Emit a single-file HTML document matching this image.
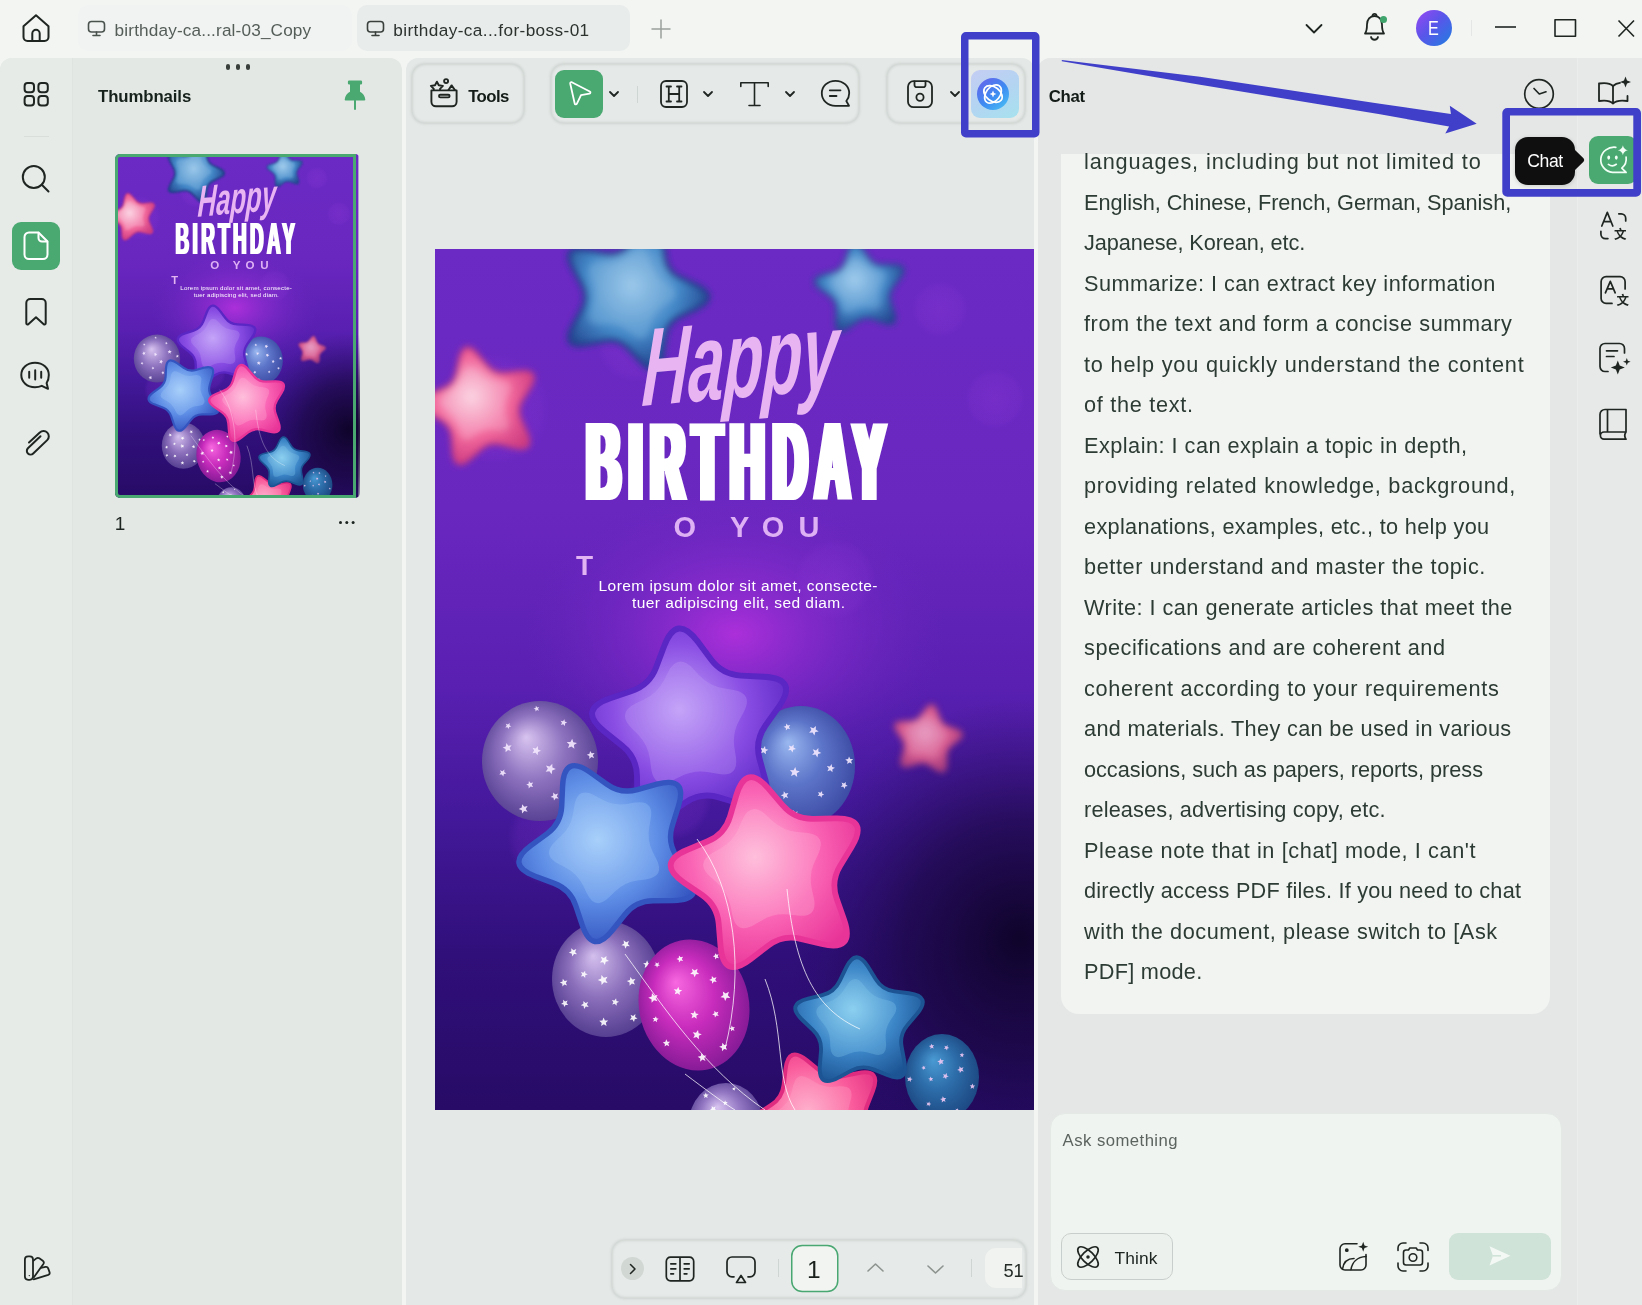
<!DOCTYPE html>
<html lang="en"><head><meta charset="utf-8"><title>UPDF</title>
<style>
*{box-sizing:border-box;margin:0;padding:0}
html,body{width:1642px;height:1305px;overflow:hidden}
body{background:#f3f5f3;font-family:"Liberation Sans","Noto Sans CJK SC",sans-serif;color:#1d2521;position:relative}
#app{position:absolute;left:0;top:0;width:1642px;height:1305px;overflow:hidden;will-change:transform}
.abs{position:absolute}
svg{position:absolute;overflow:visible}
.ic{fill:none;stroke:#1f2622;stroke-width:2;stroke-linecap:round;stroke-linejoin:round}
.panel{position:absolute;background:#e4e8e6}
.t{position:absolute;white-space:nowrap;line-height:1}
.grp{position:absolute;background:#e5e9e7;border-radius:13px;box-shadow:0 0 2.500px 1px rgba(110,128,120,.18),inset 0 0 2.500px 1px rgba(110,128,120,.18)}
.gbtn{position:absolute;width:48px;height:48px;border-radius:9px;background:#4aa871}
</style>
</head>
<body>
<div id="app">

<!-- top bar -->
<div class="abs" style="left:78px;top:5px;width:274px;height:46px;border-radius:10px;background:#f0f3f1"></div>
<div class="abs" style="left:357px;top:5px;width:273px;height:46px;border-radius:10px;background:#e8ecea"></div>
<svg class="ic" style="left:20px;top:12px" width="32" height="32" viewBox="0 0 32 32"><path d="M3.5 14.2 L16 3.2 L28.5 14.2 V25 a4 4 0 0 1 -4 4 H7.500 a4 4 0 0 1 -4 -4 Z"/><path d="M12.3 29 V21.500 a3.700 3.700 0 0 1 7.400 0 V29"/></svg>
<svg class="ic" style="left:87px;top:20px;stroke:#4a524e;stroke-width:1.600" width="20" height="18" viewBox="0 0 20 18"><rect x="1.500" y="1.500" width="16" height="10.500" rx="3"/><path d="M9.500 12 V15.500 M6 15.500 H13"/></svg>
<div class="t" id="tab1" style="left:114.6px;top:22px;font-size:17.2px;color:#555d59;letter-spacing:0.15px">birthday-ca...ral-03_Copy</div>
<svg class="ic" style="left:366px;top:20px;stroke:#3a413d;stroke-width:1.600" width="20" height="18" viewBox="0 0 20 18"><rect x="1.500" y="1.500" width="16" height="10.500" rx="3"/><path d="M9.500 12 V15.500 M6 15.500 H13"/></svg>
<div class="t" id="tab2" style="left:393.3px;top:22px;font-size:17.2px;color:#2c332f;letter-spacing:0.4px">birthday-ca...for-boss-01</div>
<svg class="ic" style="left:651px;top:19px;stroke:#9aa09d;stroke-width:1.500" width="20" height="20" viewBox="0 0 20 20"><path d="M10 1 V19 M1 10 H19"/></svg>
<svg class="ic" style="left:1305px;top:23px;stroke-width:1.800" width="18" height="12" viewBox="0 0 18 12"><path d="M1.500 2 L9 9.500 L16.500 2"/></svg>
<svg class="ic" style="left:1362px;top:11px;stroke-width:1.800" width="26" height="32" viewBox="0 0 26 32"><path d="M3 22.500 C5 20 5 17 5 13.500 C5 8.500 8 5 12.500 5 C17 5 20 8.500 20 13.500 C20 17 20 20 22 22.500 Z"/><path d="M10.500 4.800 a2 2 0 0 1 4 0"/><path d="M9 26 a3.600 3.600 0 0 0 7 0"/></svg>
<div class="abs" style="left:1380px;top:16px;width:7px;height:7px;border-radius:50%;background:#3fa56c"></div>
<div class="abs" style="left:1416px;top:10px;width:36px;height:36px;border-radius:50%;background:linear-gradient(135deg,#9a48f2 0%,#5a55ea 45%,#1f7fe0 100%)"></div>
<div class="t" id="ava" style="left:1428.3px;top:19px;font-size:19.3px;color:#fff;transform:scaleX(.84);transform-origin:0 0">E</div>
<div class="abs" style="left:1471px;top:20px;width:1px;height:16px;background:#e3e6e4"></div>
<svg class="ic" style="left:1495px;top:18px;stroke-width:1.600;stroke-linecap:butt" width="140" height="20" viewBox="0 0 140 20"><path d="M0 9 H21"/><rect x="60" y="1.800" width="20.500" height="16.500"/><path d="M123.500 2.500 L139 18.500 M139 2.500 L123.500 18.500"/></svg>


<!-- left panel -->
<div class="panel" style="left:0;top:58px;width:402px;height:1247px;border-radius:12px 12px 0 0;background:#e3e8e5"></div>
<div class="abs" style="left:0;top:58px;width:73px;height:1247px;border-radius:12px 0 0 0;background:#e6ebe8;border-right:1px solid #dfe4e1"></div>
<svg class="ic" style="left:22px;top:80px" width="28" height="28" viewBox="0 0 28 28"><rect x="2.600" y="2.900" width="9.400" height="9.400" rx="3"/><rect x="16.400" y="2.900" width="9.400" height="9.400" rx="3"/><rect x="2.600" y="16" width="9.400" height="9.400" rx="3"/><rect x="16.400" y="16" width="9.400" height="9.400" rx="3"/></svg>
<div class="abs" style="left:24px;top:136px;width:25px;height:1px;background:#d9dedb"></div>
<svg class="ic" style="left:20px;top:163px" width="32" height="32" viewBox="0 0 32 32"><circle cx="13.800" cy="14" r="11"/><path d="M21.800 21.800 L28.500 28.500"/></svg>
<div class="gbtn" style="left:12px;top:222px"></div>
<svg class="ic" style="left:22px;top:230px;stroke:#fff" width="28" height="32" viewBox="0 0 28 32"><path d="M7 2.500 H16.500 L25.500 11.500 V24.500 a4.500 4.500 0 0 1 -4.500 4.500 H7 a4.500 4.500 0 0 1 -4.500 -4.500 V7 a4.500 4.500 0 0 1 4.500 -4.500 Z"/><path d="M16.500 2.800 V8 a3.500 3.500 0 0 0 3.500 3.500 H25.200"/></svg>
<svg class="ic" style="left:23px;top:296px" width="26" height="32" viewBox="0 0 26 32"><path d="M3.300 7 a4 4 0 0 1 4 -4 H18.700 a4 4 0 0 1 4 4 V27.300 a1.200 1.200 0 0 1 -2 .9 L13 21.300 L5.300 28.200 a1.200 1.200 0 0 1 -2 -.9 Z"/></svg>
<svg class="ic" style="left:19px;top:360px" width="34" height="32" viewBox="0 0 34 32"><path d="M16 2.800 C8 2.800 2.300 8.200 2.300 15 C2.300 21.800 8 27.200 16 27.200 C18.500 27.200 20.800 26.700 22.800 25.800 L29 28.800 L27.600 23 C29.200 20.800 29.800 18 29.800 15 C29.800 8.200 24 2.800 16 2.800 Z"/><path d="M10.200 11.800 V17.800 M16.200 10.200 V19.500 M22.200 11.800 V17.800"/></svg>
<svg class="ic" style="left:22px;top:427px" width="30" height="32" viewBox="0 0 30 32"><path d="M7 15.500 L17.800 5.500 a5.300 5.300 0 0 1 7.400 7.600 L11.200 26.500 a3.700 3.700 0 0 1 -5.300 -5.200 L18.500 9.300"/><path d="M10 25.800 L22.500 13.500" stroke="none"/></svg>
<svg class="ic" style="left:20px;top:1252px;stroke-width:1.800" width="32" height="32" viewBox="0 0 32 32"><rect x="4.900" y="4.300" width="8.100" height="23.500" rx="3.200"/><path d="M13.600 8.600 L16.300 6.400 Q17.800 5.300 19.300 6.300 L22.800 8.800 Q24.500 10.100 23.400 11.900 L13.900 25.200"/><path d="M20.800 15.800 L25.600 14.900 Q27.600 14.600 28.200 16.400 L29.600 20.400 Q30.100 22.200 28.300 22.800 L13.700 27.300"/><circle cx="9.300" cy="23.600" r=".700" fill="#1f2622" stroke="none"/></svg>
<!-- thumbnails panel -->
<div class="abs" style="left:226px;top:64px;width:4px;height:6px;border-radius:2px;background:#39403c"></div>
<div class="abs" style="left:236px;top:64px;width:4px;height:6px;border-radius:2px;background:#39403c"></div>
<div class="abs" style="left:246px;top:64px;width:4px;height:6px;border-radius:2px;background:#39403c"></div>
<div class="t" id="thl" style="left:98px;top:89px;font-size:16.8px;color:#16211b;letter-spacing:-0.1px;font-weight:bold">Thumbnails</div>
<svg style="left:343px;top:79px" width="24" height="32" viewBox="0 0 24 32"><path fill="#4aa871" d="M6.200 1.500 H17.800 a1.300 1.300 0 0 1 1.300 1.300 V4.200 a1.300 1.300 0 0 1 -1.300 1.300 H17 V12.800 C19.800 14.200 22 17 22.300 20.500 a1 1 0 0 1 -1 1.100 H2.700 a1 1 0 0 1 -1 -1.100 C2 17 4.200 14.200 7 12.800 V5.500 H6.200 a1.300 1.300 0 0 1 -1.300 -1.300 V2.800 a1.300 1.300 0 0 1 1.300 -1.300 Z"/><path d="M12 21.500 V30" stroke="#4aa871" stroke-width="2" stroke-linecap="round"/></svg>
<svg style="left:115px;top:154px;overflow:hidden;border-radius:5px" width="245" height="344" viewBox="0 0 613 861" preserveAspectRatio="none"><defs><linearGradient id="thbg" x1="0" y1="0" x2="0" y2="1"><stop offset="0" stop-color="#6b2ac4"/><stop offset=".3" stop-color="#6a27c0"/><stop offset=".5" stop-color="#5a20b2"/><stop offset=".66" stop-color="#43189a"/><stop offset=".82" stop-color="#300f7a"/><stop offset="1" stop-color="#270b66"/></linearGradient><radialGradient id="thglow" cx="50%" cy="50%" r="50%"><stop offset="0" stop-color="#b030dc" stop-opacity="0.95"/><stop offset="0.5" stop-color="#8a2cd0" stop-opacity="0.5"/><stop offset="1" stop-color="#6a27c0" stop-opacity="0"/></radialGradient><radialGradient id="thdark" cx="50%" cy="50%" r="50%"><stop offset="0" stop-color="#0d0326" stop-opacity="0.95"/><stop offset="0.5" stop-color="#160638" stop-opacity="0.6"/><stop offset="1" stop-color="#230a5c" stop-opacity="0"/></radialGradient><radialGradient id="thbok" cx="50%" cy="50%" r="50%"><stop offset="0" stop-color="#a040e0" stop-opacity="0.22"/><stop offset="0.8" stop-color="#9038d8" stop-opacity="0.15"/><stop offset="1" stop-color="#9038d8" stop-opacity="0"/></radialGradient><filter id="thblur2" x="-20%" y="-20%" width="140%" height="140%"><feGaussianBlur stdDeviation="2"/></filter><filter id="thblur3" x="-20%" y="-20%" width="140%" height="140%"><feGaussianBlur stdDeviation="3"/></filter><filter id="thblur4" x="-20%" y="-20%" width="140%" height="140%"><feGaussianBlur stdDeviation="4"/></filter><radialGradient id="ths1" cx="45%" cy="42%" r="62%"><stop offset="0" stop-color="#9cc8ea"/><stop offset="0.55" stop-color="#4388c8"/><stop offset="1" stop-color="#1f3c88"/></radialGradient><radialGradient id="ths2" cx="45%" cy="42%" r="62%"><stop offset="0" stop-color="#a0ccec"/><stop offset="0.55" stop-color="#4388c8"/><stop offset="1" stop-color="#23448e"/></radialGradient><radialGradient id="ths3" cx="45%" cy="42%" r="62%"><stop offset="0" stop-color="#fbd4e2"/><stop offset="0.55" stop-color="#f2689c"/><stop offset="1" stop-color="#cc3a80"/></radialGradient><radialGradient id="ths4" cx="45%" cy="42%" r="62%"><stop offset="0" stop-color="#f6a8c4"/><stop offset="0.55" stop-color="#e4608e"/><stop offset="1" stop-color="#a83c7c"/></radialGradient><radialGradient id="thb1" cx="50%" cy="50%" r="60%" fx="38%" fy="30%"><stop offset="0" stop-color="#d8c4f0"/><stop offset="0.45" stop-color="#8f74c0"/><stop offset="1" stop-color="#4a3488"/></radialGradient><radialGradient id="thb2" cx="50%" cy="50%" r="60%" fx="38%" fy="30%"><stop offset="0" stop-color="#9ab8f0"/><stop offset="0.45" stop-color="#5c74c8"/><stop offset="1" stop-color="#34409a"/></radialGradient><radialGradient id="ths5" cx="45%" cy="42%" r="62%"><stop offset="0" stop-color="#c4a4f8"/><stop offset="0.55" stop-color="#8a4ee4"/><stop offset="1" stop-color="#5a26c4"/></radialGradient><radialGradient id="thb3" cx="50%" cy="50%" r="60%" fx="38%" fy="30%"><stop offset="0" stop-color="#d4c0ee"/><stop offset="0.45" stop-color="#8c70bc"/><stop offset="1" stop-color="#463084"/></radialGradient><radialGradient id="ths6" cx="45%" cy="42%" r="62%"><stop offset="0" stop-color="#a8d0fa"/><stop offset="0.55" stop-color="#5e8ee6"/><stop offset="1" stop-color="#3454c0"/></radialGradient><radialGradient id="thb4" cx="50%" cy="50%" r="60%" fx="38%" fy="30%"><stop offset="0" stop-color="#f868e0"/><stop offset="0.45" stop-color="#c82cbc"/><stop offset="1" stop-color="#74168c"/></radialGradient><radialGradient id="thb5" cx="50%" cy="50%" r="60%" fx="38%" fy="30%"><stop offset="0" stop-color="#4a9ad4"/><stop offset="0.45" stop-color="#2c6ca8"/><stop offset="1" stop-color="#183e78"/></radialGradient><radialGradient id="thb6" cx="50%" cy="50%" r="60%" fx="38%" fy="30%"><stop offset="0" stop-color="#d8c4f0"/><stop offset="0.45" stop-color="#9478c4"/><stop offset="1" stop-color="#4a3488"/></radialGradient><radialGradient id="ths7" cx="45%" cy="42%" r="62%"><stop offset="0" stop-color="#ffb0cc"/><stop offset="0.55" stop-color="#fa5c9c"/><stop offset="1" stop-color="#e02c80"/></radialGradient><radialGradient id="ths8" cx="45%" cy="42%" r="62%"><stop offset="0" stop-color="#ffc0dc"/><stop offset="0.55" stop-color="#fa64b4"/><stop offset="1" stop-color="#e83498"/></radialGradient><radialGradient id="ths9" cx="45%" cy="42%" r="62%"><stop offset="0" stop-color="#8cd0f0"/><stop offset="0.55" stop-color="#3c86c8"/><stop offset="1" stop-color="#1c5494"/></radialGradient><filter id="thfat" x="-5%" y="-5%" width="110%" height="110%"><feMorphology operator="dilate" radius="3.6 0.3"/></filter></defs><rect width="609" height="861" fill="url(#thbg)"/><ellipse cx="300" cy="385" rx="210" ry="150" fill="url(#thglow)"/><ellipse cx="585" cy="690" rx="230" ry="240" fill="url(#thdark)"/><circle cx="120" cy="590" r="48" fill="url(#thbok)"/><circle cx="235" cy="550" r="42" fill="url(#thbok)"/><circle cx="60" cy="160" r="55" fill="url(#thbok)"/><circle cx="200" cy="95" r="38" fill="url(#thbok)"/><circle cx="560" cy="150" r="30" fill="url(#thbok)"/><circle cx="400" cy="330" r="40" fill="url(#thbok)"/><circle cx="505" cy="60" r="28" fill="url(#thbok)"/><circle cx="330" cy="640" r="40" fill="url(#thbok)"/><g filter="url(#thblur3)"><path d="M206 -16.5Q224.2 -35.7 227.6 -9.5L230 8.7Q231.9 22.7 244.6 28.7L261.2 36.6Q285 48 261.2 59.4L244.6 67.3Q231.9 73.3 230 87.3L227.6 105.5Q224.2 131.7 206 112.5L193.4 99.2Q183.7 89 169.8 91.6L151.8 94.9Q125.8 99.7 138.4 76.5L147.2 60.4Q153.9 48 147.2 35.6L138.4 19.5Q125.8 -3.7 151.8 1.1L169.8 4.4Q183.7 7 193.4 -3.2Z" fill="url(#ths1)" stroke="#1f3c88" stroke-width="4.4" stroke-linejoin="round"/><path d="M197.8 3.1Q210.3 -7.4 214.3 8.5L216 15.6Q218.6 26.2 227.9 32L234.1 35.8Q248 44.5 234.1 53.1L227.9 57Q218.6 62.8 216 73.4L214.3 80.5Q210.3 96.4 197.8 85.8L192.2 81.1Q183.9 74.1 173 74.8L165.7 75.4Q149.3 76.5 155.5 61.4L158.3 54.6Q162.4 44.5 158.3 34.4L155.5 27.6Q149.3 12.4 165.7 13.6L173 14.1Q183.9 14.9 192.2 7.9Z" fill="#9cc8ea" opacity=".28"/></g><g filter="url(#thblur3)"><path d="M413.4 1.9Q418.5 -13.5 427.6 -0.1L433.8 9Q438.7 16.2 447.3 16.2L458.3 16.3Q474.5 16.3 464.6 29.1L457.9 37.9Q452.6 44.7 455.2 52.9L458.6 63.4Q463.5 78.8 448.3 73.4L437.9 69.7Q429.8 66.7 422.7 71.8L413.8 78.2Q400.6 87.7 401.1 71.5L401.5 60.5Q401.7 51.8 394.8 46.7L385.9 40.2Q372.8 30.6 388.4 26.1L399 23Q407.2 20.6 410 12.4Z" fill="url(#ths2)" stroke="#23448e" stroke-width="2.7" stroke-linejoin="round"/><path d="M415 13.8Q419.2 4.7 425.7 12.3L428.6 15.6Q433 20.7 439.6 21.5L444 22Q453.9 23.2 448.7 31.7L446.4 35.5Q443 41.2 444.3 47.8L445.1 52.1Q447.1 61.9 437.3 59.6L433.1 58.6Q426.5 57.1 420.7 60.3L416.9 62.5Q408.1 67.4 407.3 57.4L406.9 53Q406.4 46.4 401.5 41.8L398.2 38.8Q390.9 32 400.1 28.1L404.2 26.5Q410.4 23.9 413.2 17.8Z" fill="#a0ccec" opacity=".28"/></g><g filter="url(#thblur3)"><path d="M24.6 110.6Q29.1 90.1 42.6 106.1L51.9 117Q59.1 125.5 70.3 124.4L84.5 123Q105.4 120.9 94.3 138.8L86.8 150.9Q80.9 160.4 85.4 170.7L91.2 183.8Q99.6 203 79.2 198L65.3 194.6Q54.5 192 46.1 199.4L35.4 208.9Q19.8 222.9 18.2 202L17.2 187.7Q16.3 176.5 6.6 170.9L-5.7 163.7Q-23.8 153.1 -4.4 145.2L8.8 139.7Q19.2 135.5 21.6 124.6Z" fill="url(#ths3)" stroke="#cc3a80" stroke-width="3.5" stroke-linejoin="round"/><path d="M28.5 125.4Q32.7 113.1 42.2 122L46.3 125.9Q52.6 131.9 61.3 132L67 132Q80 132.2 74.4 144L72 149.1Q68.3 157 70.9 165.2L72.6 170.7Q76.4 183.1 63.5 181.4L57.9 180.7Q49.3 179.6 42.2 184.6L37.6 187.9Q26.9 195.4 24.5 182.6L23.5 177.1Q21.9 168.5 14.9 163.4L10.3 160Q-0.1 152.2 11.3 145.9L16.3 143.2Q23.9 139 26.7 130.8Z" fill="#fbd4e2" opacity=".28"/></g><g filter="url(#thblur3)" opacity="0.92"><path d="M490.4 460.3Q497.7 450.4 502 461.9L504.8 469.2Q507.1 475.4 513.3 477.5L520.7 480Q532.4 483.9 522.8 491.6L516.7 496.4Q511.5 500.5 511.5 507.1L511.4 514.9Q511.2 527.2 501 520.4L494.5 516.1Q489 512.5 482.7 514.5L475.3 516.8Q463.5 520.5 466.8 508.6L468.9 501.1Q470.6 494.8 466.8 489.4L462.3 483.1Q455.1 473 467.4 472.5L475.2 472.1Q481.8 471.8 485.7 466.5Z" fill="url(#ths4)" stroke="#a83c7c" stroke-width="2.1" stroke-linejoin="round"/><path d="M488.7 469.7Q493.9 464.2 497.4 471L498.8 473.7Q501.1 478.2 505.7 480.4L508.5 481.7Q515.4 484.9 510 490.4L507.9 492.5Q504.3 496.2 503.7 501.2L503.3 504.2Q502.3 511.8 495.5 508.4L492.7 507Q488.2 504.7 483.2 505.7L480.2 506.2Q472.7 507.6 473.9 500.1L474.3 497.1Q475.1 492.1 472.6 487.6L471.2 484.9Q467.5 478.2 475 477L478.1 476.5Q483.1 475.7 486.6 472Z" fill="#f6a8c4" opacity=".28"/></g><g><ellipse cx="105" cy="512" rx="58" ry="60" fill="url(#thb1)"/><g fill="#f4e8ff" opacity=".9"><polygon points="69.4,520.6 69.2,523.1 71.4,524.5 68.9,525.1 68.3,527.6 66.9,525.4 64.3,525.6 66,523.6 65,521.2 67.4,522.2"/><polygon points="137.2,489.7 138.3,493.3 142,494 138.9,496.1 139.4,499.8 136.4,497.5 133,499.1 134.3,495.6 131.7,492.9 135.4,493"/><polygon points="118.2,543.5 120.3,545.5 123.1,544.6 121.8,547.2 123.6,549.6 120.7,549.2 119,551.6 118.5,548.7 115.6,547.9 118.2,546.4"/><polygon points="74.7,474.1 74.5,476.3 76.3,477.5 74.2,478 73.6,480.1 72.5,478.2 70.3,478.4 71.7,476.7 70.9,474.7 72.9,475.5"/><polygon points="145.3,534.7 145.8,537.1 148.1,537.8 146,539 146,541.5 144.2,539.8 141.9,540.6 142.9,538.4 141.4,536.4 143.9,536.7"/><polygon points="102.9,497.1 103,500.4 106,501.8 103,502.9 102.6,506.2 100.6,503.7 97.4,504.3 99.1,501.6 97.5,498.7 100.7,499.6"/><polygon points="155.1,502 156.7,504.3 159.6,504 157.8,506.3 159.1,508.9 156.4,507.9 154.3,509.9 154.3,507 151.8,505.7 154.5,504.8"/><polygon points="129.4,470.2 129.8,472.6 132.1,473.4 130,474.5 130,477 128.2,475.2 125.9,476 127,473.8 125.5,471.8 128,472.2"/><polygon points="93.9,532 95.6,534.1 98.2,533.6 96.8,535.8 98.1,538.1 95.5,537.4 93.7,539.4 93.6,536.7 91.2,535.6 93.6,534.7"/><polygon points="117.3,514.7 117.4,518.5 120.8,520.1 117.2,521.4 116.7,525.2 114.4,522.2 110.7,522.8 112.8,519.7 111,516.4 114.6,517.4"/><polygon points="71.4,494.1 73.3,496.8 76.6,496.3 74.6,499 76.1,502 73,501 70.6,503.3 70.6,500 67.7,498.4 70.8,497.4"/><polygon points="87.1,555.2 89.3,557.8 92.6,557 90.8,559.9 92.6,562.8 89.3,562 87.1,564.6 86.8,561.2 83.7,559.9 86.8,558.6"/><polygon points="100.9,456.8 102.2,458.5 104.2,458.1 103,459.8 104,461.7 102,461.1 100.5,462.6 100.5,460.5 98.6,459.5 100.6,458.9"/></g></g><g><ellipse cx="366" cy="517" rx="54" ry="60" fill="url(#thb2)"/><g fill="#f4e8ff" opacity=".9"><polygon points="328.5,520.6 328.5,523.1 330.7,524.2 328.3,525 327.9,527.5 326.5,525.5 324,525.9 325.5,523.8 324.4,521.6 326.7,522.4"/><polygon points="358.7,495.6 358.5,498.5 361,500 358.2,500.7 357.5,503.5 355.9,501.1 353,501.3 354.9,499.1 353.8,496.4 356.5,497.5"/><polygon points="396.6,515 397.1,517.9 400,518.8 397.4,520.2 397.5,523.3 395.3,521.2 392.4,522.2 393.7,519.5 391.9,517.1 394.9,517.5"/><polygon points="358.2,561 360,563.2 362.9,562.6 361.3,565.1 362.8,567.6 360,566.9 358,569.1 357.8,566.2 355.2,565 357.9,563.9"/><polygon points="351.3,474.5 352.9,476.5 355.3,476 353.9,478.1 355.1,480.3 352.7,479.6 350.9,481.4 350.9,478.9 348.6,477.8 351,477"/><polygon points="330,497 330.5,500 333.4,500.8 330.8,502.3 330.9,505.3 328.7,503.2 325.8,504.3 327.1,501.5 325.3,499.1 328.3,499.5"/><polygon points="387.1,542.1 387.1,544.5 389.2,545.7 386.9,546.4 386.5,548.7 385.1,546.8 382.7,547.1 384.1,545.2 383.1,543.1 385.4,543.8"/><polygon points="348.8,542.3 350.6,544.6 353.4,544.1 351.8,546.4 353.2,548.9 350.4,548.1 348.5,550.2 348.4,547.4 345.8,546.2 348.5,545.2"/><polygon points="410.9,533.1 410.6,535.6 412.7,536.9 410.3,537.4 409.6,539.9 408.3,537.7 405.8,537.8 407.5,535.9 406.6,533.6 408.9,534.6"/><polygon points="360.3,518 361.3,521.5 364.8,522.3 361.8,524.3 362.2,527.9 359.3,525.6 356,527.1 357.3,523.7 354.9,521 358.5,521.2"/><polygon points="381,477 380.7,480.5 383.7,482.4 380.3,483.1 379.4,486.5 377.6,483.5 374.1,483.8 376.4,481.1 375.1,477.9 378.3,479.2"/><polygon points="414,507.4 415.3,509.9 418.2,509.9 416.1,511.9 417.1,514.7 414.5,513.4 412.2,515.1 412.6,512.3 410.2,510.6 413.1,510.1"/><polygon points="383.4,499.1 383.3,502.5 386.3,504.1 383.1,505.1 382.4,508.4 380.5,505.6 377.1,506.1 379.2,503.4 377.8,500.3 381,501.4"/></g></g><g><path d="M229.1 397.3Q241.6 364.1 262.7 392.6L276.1 410.6Q287.4 425.8 306.2 426.6L328.7 427.7Q364.1 429.3 343.6 458.1L330.5 476.5Q319.6 491.9 324.6 510.1L330.6 531.8Q340 565.9 306.2 555.3L284.7 548.6Q266.7 542.9 250.9 553.3L232.2 565.7Q202.6 585.2 202.2 549.8L202 527.3Q201.8 508.4 187 496.6L169.5 482.6Q141.8 460.5 175.3 449.2L196.7 442Q214.6 436 221.2 418.3Z" fill="url(#ths5)" stroke="#5a26c4" stroke-width="5.9" stroke-linejoin="round"/><path d="M233 423.3Q243.1 403.8 258.1 419.8L264.2 426.2Q274.2 436.9 288.7 439.2L297.4 440.7Q319 444.2 308.5 463.5L304.3 471.2Q297.2 484 299.4 498.5L300.8 507.2Q304.1 528.9 282.5 524.8L273.9 523.2Q259.5 520.5 246.4 527L238.5 531Q218.9 540.9 216.1 519.1L215 510.4Q213.2 495.8 202.9 485.4L196.7 479.2Q181.2 463.6 201.1 454.2L209 450.4Q222.3 444.2 229 431.2Z" fill="#c4a4f8" opacity=".28"/></g><g><ellipse cx="171" cy="730" rx="54" ry="58" fill="url(#thb3)"/><g fill="#fff" opacity=".9"><polygon points="168.6,768.4 169.9,771.4 173.2,771.5 170.8,773.7 171.6,776.9 168.8,775.3 166.1,777.1 166.7,773.9 164.2,771.8 167.4,771.5"/><polygon points="154,683.2 154.1,685.2 155.9,686 154,686.8 153.8,688.8 152.5,687.2 150.5,687.6 151.7,685.9 150.6,684.2 152.6,684.7"/><polygon points="181.1,749.3 181.5,751.9 184.1,752.8 181.7,754 181.6,756.7 179.7,754.8 177.2,755.6 178.4,753.2 176.9,751 179.5,751.4"/><polygon points="171.5,707 171.2,710.3 174,712.1 170.7,712.8 169.9,716 168.2,713.2 164.9,713.4 167.1,710.9 165.9,707.8 168.9,709.1"/><polygon points="150.1,721.7 150.3,724.3 152.8,725.3 150.3,726.3 150.2,728.9 148.4,726.9 145.9,727.5 147.2,725.3 145.9,723.1 148.4,723.7"/><polygon points="188.6,691.3 191.1,693.3 193.9,692 192.8,694.9 194.9,697.2 191.8,697.1 190.3,699.8 189.5,696.8 186.4,696.2 189,694.4"/><polygon points="195.4,727.9 197.3,730.6 200.4,730.1 198.5,732.7 199.9,735.6 196.9,734.5 194.6,736.7 194.6,733.5 191.8,732 194.9,731.1"/><polygon points="200.4,765.1 200.1,768 202.5,769.5 199.7,770.2 199,773 197.5,770.5 194.7,770.7 196.6,768.5 195.5,765.8 198.1,767"/><polygon points="212.1,711.2 213.2,713.9 216.1,714.1 213.9,716 214.6,718.8 212.1,717.3 209.7,718.9 210.3,716 208.1,714.2 211,713.9"/><polygon points="127.8,729.8 129.6,732 132.4,731.5 130.8,733.9 132.1,736.4 129.4,735.6 127.4,737.6 127.4,734.8 124.8,733.6 127.5,732.6"/><polygon points="148.4,751.9 150.5,753.9 153.2,753 151.9,755.6 153.7,758 150.8,757.5 149.1,759.9 148.6,757 145.8,756.2 148.4,754.8"/><polygon points="136.2,699.2 138.5,701.2 141.3,700.1 140.1,702.9 142,705.2 139,704.9 137.4,707.5 136.7,704.5 133.8,703.7 136.4,702.2"/><polygon points="166.4,725.9 168.9,728.7 172.5,727.7 170.6,730.9 172.6,734 169,733.3 166.6,736.1 166.3,732.4 162.8,731.1 166.2,729.6"/><polygon points="128.1,750.8 130.1,752.6 132.6,751.6 131.5,754 133.2,756.1 130.6,755.9 129.2,758.1 128.6,755.5 126,754.9 128.3,753.5"/></g></g><g><path d="M127.6 536.9Q129.1 504.8 155.3 523.4L171.9 535.2Q185.8 545.2 202.4 540.6L222 535.2Q253 526.7 243.4 557.3L237.3 576.8Q232.2 593.1 241.6 607.4L252.8 624.4Q270.5 651.2 238.4 651.6L218 651.8Q200.9 652 190.2 665.3L177.4 681.3Q157.4 706.4 147.2 676L140.7 656.6Q135.2 640.4 119.2 634.4L100.1 627.2Q70 615.9 95.8 596.7L112.2 584.6Q125.9 574.4 126.7 557.3Z" fill="url(#ths6)" stroke="#3454c0" stroke-width="5.4" stroke-linejoin="round"/><path d="M139.4 556.7Q142.6 537.1 160.1 546.7L167.1 550.5Q178.7 556.9 191.9 554.9L199.8 553.6Q219.4 550.6 215.7 570.2L214.3 578.1Q211.8 591.1 217.8 602.9L221.4 610.1Q230.3 627.9 210.6 630.4L202.6 631.4Q189.5 633.1 180 642.4L174.3 648.1Q160.2 662.1 151.7 644.1L148.3 636.8Q142.6 624.8 130.8 618.7L123.7 615.1Q106 606 120.5 592.3L126.3 586.8Q136 577.7 138.1 564.6Z" fill="#a8d0fa" opacity=".28"/></g><g transform="rotate(-12 259 756)"><ellipse cx="259" cy="756" rx="55" ry="66" fill="url(#thb4)"/><g fill="#fff" opacity=".9"><polygon points="291.5,783.9 292.3,785.8 294.4,786 292.8,787.4 293.3,789.5 291.5,788.4 289.7,789.4 290.2,787.4 288.6,786 290.7,785.8"/><polygon points="230.2,706.2 231.6,707.7 233.6,707 232.6,708.9 233.8,710.6 231.8,710.2 230.6,711.9 230.3,709.8 228.3,709.2 230.1,708.3"/><polygon points="257.7,781.4 257.6,784.7 260.5,786.3 257.3,787.2 256.7,790.5 254.8,787.8 251.5,788.2 253.5,785.5 252.1,782.5 255.2,783.6"/><polygon points="254.6,704.4 255.8,706.6 258.4,706.5 256.6,708.4 257.5,710.8 255.2,709.7 253.1,711.2 253.5,708.7 251.4,707.3 253.9,706.8"/><polygon points="224.7,783.8 225.4,786.4 228.1,786.9 225.8,788.4 226.2,791.1 224,789.4 221.6,790.6 222.5,788 220.7,786.1 223.4,786.1"/><polygon points="282.5,731.3 284,733.7 286.8,733.5 285,735.7 286,738.3 283.4,737.2 281.2,739.1 281.5,736.2 279,734.7 281.8,734.1"/><polygon points="256.4,804.5 257.4,807.5 260.6,808 258,809.9 258.6,813.1 256,811.2 253.2,812.7 254.1,809.7 251.8,807.5 255,807.4"/><polygon points="247.5,734.9 247.7,737.9 250.5,739.2 247.6,740.3 247.3,743.4 245.4,741 242.4,741.6 244,739 242.5,736.4 245.5,737.2"/><polygon points="220.4,735.6 222,738.7 225.5,738.7 223,741.2 224,744.6 220.9,743 218,745 218.6,741.5 215.8,739.4 219.3,738.9"/><polygon points="277.7,765.9 279.1,767.9 281.5,767.6 280,769.6 281,771.8 278.7,771 276.9,772.7 277,770.2 274.8,769 277.2,768.3"/><polygon points="290,748.7 292.4,751.4 295.9,750.4 294.1,753.6 296,756.6 292.5,755.8 290.3,758.6 289.9,755.1 286.5,753.8 289.8,752.3"/><polygon points="258.7,761.5 259,764.6 261.8,765.7 259,766.9 258.8,770 256.8,767.7 253.9,768.4 255.4,765.8 253.8,763.2 256.8,763.9"/><polygon points="219.5,759 219.6,761.2 221.6,762.2 219.5,763 219.2,765.2 217.8,763.4 215.6,763.8 216.9,762 215.8,760 217.9,760.6"/><polygon points="290.4,709.7 291.5,711.6 293.8,711.6 292.3,713.2 293.1,715.4 291,714.4 289.2,715.8 289.5,713.6 287.6,712.3 289.8,711.8"/><polygon points="264.5,720 266.9,722.3 270,721.3 268.6,724.2 270.5,726.8 267.3,726.4 265.4,729.1 264.8,725.8 261.7,724.9 264.6,723.3"/><polygon points="278.9,798.7 280.3,801.5 283.4,801.5 281.2,803.7 282.1,806.6 279.3,805.2 276.8,807 277.3,803.9 274.9,802.1 277.9,801.6"/></g></g><g><ellipse cx="507" cy="828" rx="37" ry="43" fill="url(#thb5)"/><g fill="#f0c8f4" opacity=".9"><polygon points="511.9,824.1 511.8,826.4 513.8,827.5 511.6,828.1 511.1,830.3 509.9,828.4 507.7,828.7 509,826.9 508.1,824.9 510.2,825.7"/><polygon points="505.2,809.2 506.5,811.2 508.9,811 507.4,812.9 508.4,815.1 506.1,814.2 504.3,815.9 504.4,813.4 502.3,812.3 504.7,811.6"/><polygon points="527.2,803.6 527.7,805.2 529.4,805.6 528,806.5 528.2,808.2 526.9,807.2 525.3,807.9 525.9,806.3 524.7,805 526.4,805.1"/><polygon points="507.7,847.2 508.9,849.1 511.2,848.9 509.7,850.7 510.6,852.8 508.5,851.9 506.8,853.4 506.9,851.1 505,850 507.2,849.4"/><polygon points="487.9,816.6 488.9,817.8 490.5,817.4 489.7,818.8 490.6,820.1 489,819.8 488,821.1 487.8,819.5 486.3,818.9 487.8,818.2"/><polygon points="475.4,827.4 475.7,829.4 477.7,830.1 475.8,831 475.8,833.1 474.4,831.6 472.4,832.3 473.3,830.4 472.1,828.7 474.2,829"/><polygon points="522.9,859.2 522.9,860.6 524.2,861.2 522.9,861.7 522.7,863.1 521.8,862 520.4,862.2 521.2,861.1 520.5,859.8 521.9,860.2"/><polygon points="496.2,794.7 497.2,796.3 499.2,796.1 497.9,797.6 498.7,799.4 496.9,798.7 495.4,800 495.6,798 493.9,797.1 495.8,796.6"/><polygon points="524.4,817.3 526.1,819.1 528.5,818.3 527.4,820.5 528.8,822.5 526.4,822.1 524.9,824.1 524.5,821.7 522.2,820.9 524.4,819.8"/><polygon points="495.4,827.5 496.4,829 498.2,828.9 497,830.3 497.7,832 496,831.3 494.7,832.5 494.8,830.6 493.2,829.7 495,829.3"/><polygon points="537.6,834.5 538.2,836.4 540.2,836.6 538.6,837.9 539,839.8 537.4,838.7 535.6,839.7 536.2,837.7 534.7,836.4 536.7,836.3"/><polygon points="512.6,796.1 512.5,798 514.2,799 512.4,799.5 512,801.4 510.9,799.8 509,800 510.2,798.5 509.4,796.8 511.2,797.4"/><polygon points="494.4,852.5 494.6,854.3 496.2,855 494.6,855.7 494.5,857.5 493.3,856.1 491.5,856.6 492.4,855 491.5,853.5 493.2,853.9"/><polygon points="507.7,864.6 507.8,865.9 509,866.4 507.8,866.9 507.7,868.2 506.9,867.3 505.6,867.6 506.3,866.4 505.6,865.3 506.8,865.6"/></g></g><g><ellipse cx="291" cy="874" rx="37" ry="40" fill="url(#thb6)"/><g fill="#fff" opacity=".9"><polygon points="277.3,889.7 277.5,892.2 279.7,893.2 277.4,894.1 277.1,896.5 275.6,894.6 273.2,895.1 274.5,893 273.3,890.9 275.7,891.5"/><polygon points="289.6,899.5 290.4,901.5 292.6,901.7 290.9,903.1 291.3,905.3 289.5,904.1 287.6,905.2 288.2,903.1 286.5,901.6 288.7,901.5"/><polygon points="308.3,872.8 309.6,874.1 311.3,873.6 310.5,875.2 311.5,876.7 309.7,876.4 308.6,877.8 308.3,876 306.6,875.4 308.3,874.6"/><polygon points="290.1,851.2 290.9,852.9 292.8,853 291.4,854.3 291.9,856.1 290.3,855.2 288.7,856.3 289.1,854.4 287.6,853.2 289.5,853"/><polygon points="299.4,837.9 299.6,839.3 300.9,839.7 299.7,840.3 299.8,841.7 298.8,840.7 297.5,841.2 298.1,840 297.2,838.9 298.6,839"/><polygon points="276.7,857 278.5,858.5 280.6,857.5 279.8,859.7 281.4,861.4 279.1,861.3 277.9,863.4 277.3,861.1 275,860.7 276.9,859.3"/><polygon points="270.8,843.6 271.6,845.5 273.7,845.6 272.1,847 272.6,849 270.8,847.9 269.1,849 269.5,847 267.9,845.7 270,845.5"/><polygon points="289,877.1 290.2,879.7 293.1,879.9 290.9,881.8 291.7,884.6 289.2,883.2 286.8,884.7 287.4,881.9 285.1,880.1 288,879.8"/></g></g><g><path d="M350.5 820.4Q353.3 796 372.3 811.6L384.4 821.5Q394.5 829.8 407.4 827.2L422.7 824.2Q446.8 819.3 437.8 842.2L432.1 856.8Q427.4 869 433.8 880.4L441.5 894Q453.5 915.5 429 914L413.4 913.1Q400.3 912.3 391.4 922L380.8 933.5Q364.2 951.6 358 927.8L354 912.6Q350.7 899.9 338.8 894.5L324.6 888Q302.2 877.7 322.9 864.5L336.1 856Q347.1 849 348.7 835.9Z" fill="url(#ths7)" stroke="#e02c80" stroke-width="4.1" stroke-linejoin="round"/><path d="M358.2 836.4Q361.7 821.6 374.5 829.8L379.7 833.1Q388.2 838.6 398.4 837.8L404.5 837.3Q419.7 836 415.8 850.8L414.2 856.7Q411.7 866.6 415.6 875.9L417.9 881.6Q423.8 895.7 408.6 896.5L402.5 896.9Q392.3 897.5 384.6 904.1L380 908.1Q368.4 918 362.9 903.8L360.7 898.1Q357 888.7 348.3 883.4L343 880.2Q330 872.3 341.8 862.6L346.6 858.7Q354.4 852.3 356.8 842.4Z" fill="#ffb0cc" opacity=".28"/></g><g><path d="M301.2 546.6Q311.1 513.5 333.5 539.7L347.8 556.4Q359.8 570.3 378.2 569.9L400.1 569.3Q434.6 568.5 416.6 597.9L405.2 616.7Q395.6 632.4 401.7 649.7L409 670.4Q420.5 703 386.9 695L365.6 689.9Q347.7 685.6 333.1 696.8L315.6 710.1Q288.2 731.1 285.5 696.7L283.7 674.8Q282.2 656.5 267.1 646L249 633.6Q220.6 614 252.5 600.7L272.7 592.3Q289.7 585.2 295 567.6Z" fill="url(#ths8)" stroke="#e83498" stroke-width="5.8" stroke-linejoin="round"/><path d="M307.1 571.3Q315.6 551.7 331.3 566.2L337.6 572Q348.1 581.7 362.3 583L370.8 583.8Q392.1 585.8 383.2 605.2L379.6 613Q373.7 625.9 376.8 639.9L378.7 648.2Q383.4 669.1 362.1 666.6L353.6 665.6Q339.4 663.9 327.2 671.2L319.8 675.6Q301.4 686.5 297.2 665.6L295.5 657.1Q292.7 643.1 282 633.7L275.6 628.1Q259.5 613.9 278.1 603.5L285.6 599.3Q298.1 592.3 303.7 579.2Z" fill="#ffc0dc" opacity=".28"/></g><g><path d="M411 718.9Q421 698.1 433.1 717.8L440.8 730.3Q447.2 740.8 459.4 742.4L474 744.3Q496.9 747.4 481.9 765L472.4 776.2Q464.4 785.6 466.6 797.7L469.3 812.1Q473.5 834.8 452.1 826L438.5 820.4Q427.1 815.8 416.3 821.6L403.4 828.6Q383.1 839.6 384.8 816.5L386 801.9Q386.9 789.6 378 781.1L367.4 771Q350.6 755.1 373.1 749.6L387.3 746.2Q399.3 743.3 404.6 732.2Z" fill="url(#ths9)" stroke="#1c5494" stroke-width="3.9" stroke-linejoin="round"/><path d="M411.8 736.4Q419.4 724.2 428.3 735.5L431.9 740Q437.8 747.5 447 749.9L452.6 751.3Q466.5 754.8 458.5 766.7L455.3 771.5Q450 779.5 450.7 789L451 794.7Q452 809 438.2 805.1L432.6 803.6Q423.4 801 414.6 804.5L409.2 806.7Q395.9 812 395.3 797.6L395.1 791.9Q394.7 782.4 388.6 775L385 770.6Q375.8 759.6 389.2 754.6L394.6 752.6Q403.6 749.3 408.7 741.2Z" fill="#8cd0f0" opacity=".28"/></g><g fill="none" stroke="#fff" stroke-opacity=".75" stroke-width="1"><path d="M262 590 C300 640 310 720 290 800"/><path d="M330 730 C350 780 340 830 360 861"/><path d="M352 640 C360 720 380 760 425 780"/><path d="M190 705 C230 760 270 820 330 861"/><path d="M250 825 C270 840 290 855 300 861"/></g><text x="206" y="157" font-family="Liberation Sans, sans-serif" font-size="110" font-weight="bold" font-style="italic" fill="#e8b4f2" textLength="196" lengthAdjust="spacingAndGlyphs" transform="rotate(-5 206 157) translate(206 157) skewX(-8) translate(-206 -157)">Happy</text><text x="151.500" y="250.500" font-family="Liberation Sans, sans-serif" font-size="111" font-weight="bold" fill="#fff" letter-spacing="20" textLength="307" lengthAdjust="spacingAndGlyphs" filter="url(#thfat)">BIRTHDAY</text><text x="238.600 270 294.900 326.800 363.400" y="287.800" font-family="Liberation Sans, sans-serif" font-size="29" font-weight="bold" fill="#deb0f4">O YOU</text><text x="141" y="326.400" font-family="Liberation Sans, sans-serif" font-size="28" font-weight="bold" fill="#e2b4f2">T</text><text x="163.500" y="341.500" font-family="Liberation Sans, sans-serif" font-size="15.500" fill="#fff" textLength="279">Lorem ipsum dolor sit amet, consecte-</text><text x="197" y="358.500" font-family="Liberation Sans, sans-serif" font-size="15.500" fill="#fff" textLength="213">tuer adipiscing elit, sed diam.</text></svg>
<div class="abs" style="left:115px;top:154px;width:240.500px;height:344.300px;border-radius:5px 0 0 5px;border:3px solid #4aa871"></div>
<div class="t" id="thn" style="left:114.8px;top:514px;font-size:19px;color:#1d2521">1</div>
<div class="abs" style="left:338.700px;top:521px;width:3.200px;height:3.200px;border-radius:50%;background:#1d2521;box-shadow:6.300px 0 0 #1d2521,12.600px 0 0 #1d2521"></div>


<!-- center panel -->
<div class="panel" style="left:405.500px;top:58px;width:628px;height:1247px;border-radius:12px 12px 0 0;background:#e4e8e6"></div>
<svg style="left:435px;top:249px;overflow:hidden" width="598.5" height="861" viewBox="0 0 598.5 861" preserveAspectRatio="none"><defs><linearGradient id="mcbg" x1="0" y1="0" x2="0" y2="1"><stop offset="0" stop-color="#6b2ac4"/><stop offset=".3" stop-color="#6a27c0"/><stop offset=".5" stop-color="#5a20b2"/><stop offset=".66" stop-color="#43189a"/><stop offset=".82" stop-color="#300f7a"/><stop offset="1" stop-color="#270b66"/></linearGradient><radialGradient id="mcglow" cx="50%" cy="50%" r="50%"><stop offset="0" stop-color="#b030dc" stop-opacity="0.95"/><stop offset="0.5" stop-color="#8a2cd0" stop-opacity="0.5"/><stop offset="1" stop-color="#6a27c0" stop-opacity="0"/></radialGradient><radialGradient id="mcdark" cx="50%" cy="50%" r="50%"><stop offset="0" stop-color="#0d0326" stop-opacity="0.95"/><stop offset="0.5" stop-color="#160638" stop-opacity="0.6"/><stop offset="1" stop-color="#230a5c" stop-opacity="0"/></radialGradient><radialGradient id="mcbok" cx="50%" cy="50%" r="50%"><stop offset="0" stop-color="#a040e0" stop-opacity="0.22"/><stop offset="0.8" stop-color="#9038d8" stop-opacity="0.15"/><stop offset="1" stop-color="#9038d8" stop-opacity="0"/></radialGradient><filter id="mcblur2" x="-20%" y="-20%" width="140%" height="140%"><feGaussianBlur stdDeviation="2"/></filter><filter id="mcblur3" x="-20%" y="-20%" width="140%" height="140%"><feGaussianBlur stdDeviation="3"/></filter><filter id="mcblur4" x="-20%" y="-20%" width="140%" height="140%"><feGaussianBlur stdDeviation="4"/></filter><radialGradient id="mcs1" cx="45%" cy="42%" r="62%"><stop offset="0" stop-color="#9cc8ea"/><stop offset="0.55" stop-color="#4388c8"/><stop offset="1" stop-color="#1f3c88"/></radialGradient><radialGradient id="mcs2" cx="45%" cy="42%" r="62%"><stop offset="0" stop-color="#a0ccec"/><stop offset="0.55" stop-color="#4388c8"/><stop offset="1" stop-color="#23448e"/></radialGradient><radialGradient id="mcs3" cx="45%" cy="42%" r="62%"><stop offset="0" stop-color="#fbd4e2"/><stop offset="0.55" stop-color="#f2689c"/><stop offset="1" stop-color="#cc3a80"/></radialGradient><radialGradient id="mcs4" cx="45%" cy="42%" r="62%"><stop offset="0" stop-color="#f6a8c4"/><stop offset="0.55" stop-color="#e4608e"/><stop offset="1" stop-color="#a83c7c"/></radialGradient><radialGradient id="mcb1" cx="50%" cy="50%" r="60%" fx="38%" fy="30%"><stop offset="0" stop-color="#d8c4f0"/><stop offset="0.45" stop-color="#8f74c0"/><stop offset="1" stop-color="#4a3488"/></radialGradient><radialGradient id="mcb2" cx="50%" cy="50%" r="60%" fx="38%" fy="30%"><stop offset="0" stop-color="#9ab8f0"/><stop offset="0.45" stop-color="#5c74c8"/><stop offset="1" stop-color="#34409a"/></radialGradient><radialGradient id="mcs5" cx="45%" cy="42%" r="62%"><stop offset="0" stop-color="#c4a4f8"/><stop offset="0.55" stop-color="#8a4ee4"/><stop offset="1" stop-color="#5a26c4"/></radialGradient><radialGradient id="mcb3" cx="50%" cy="50%" r="60%" fx="38%" fy="30%"><stop offset="0" stop-color="#d4c0ee"/><stop offset="0.45" stop-color="#8c70bc"/><stop offset="1" stop-color="#463084"/></radialGradient><radialGradient id="mcs6" cx="45%" cy="42%" r="62%"><stop offset="0" stop-color="#a8d0fa"/><stop offset="0.55" stop-color="#5e8ee6"/><stop offset="1" stop-color="#3454c0"/></radialGradient><radialGradient id="mcb4" cx="50%" cy="50%" r="60%" fx="38%" fy="30%"><stop offset="0" stop-color="#f868e0"/><stop offset="0.45" stop-color="#c82cbc"/><stop offset="1" stop-color="#74168c"/></radialGradient><radialGradient id="mcb5" cx="50%" cy="50%" r="60%" fx="38%" fy="30%"><stop offset="0" stop-color="#4a9ad4"/><stop offset="0.45" stop-color="#2c6ca8"/><stop offset="1" stop-color="#183e78"/></radialGradient><radialGradient id="mcb6" cx="50%" cy="50%" r="60%" fx="38%" fy="30%"><stop offset="0" stop-color="#d8c4f0"/><stop offset="0.45" stop-color="#9478c4"/><stop offset="1" stop-color="#4a3488"/></radialGradient><radialGradient id="mcs7" cx="45%" cy="42%" r="62%"><stop offset="0" stop-color="#ffb0cc"/><stop offset="0.55" stop-color="#fa5c9c"/><stop offset="1" stop-color="#e02c80"/></radialGradient><radialGradient id="mcs8" cx="45%" cy="42%" r="62%"><stop offset="0" stop-color="#ffc0dc"/><stop offset="0.55" stop-color="#fa64b4"/><stop offset="1" stop-color="#e83498"/></radialGradient><radialGradient id="mcs9" cx="45%" cy="42%" r="62%"><stop offset="0" stop-color="#8cd0f0"/><stop offset="0.55" stop-color="#3c86c8"/><stop offset="1" stop-color="#1c5494"/></radialGradient><filter id="mcfat" x="-5%" y="-5%" width="110%" height="110%"><feMorphology operator="dilate" radius="3.6 0.3"/></filter></defs><rect width="609" height="861" fill="url(#mcbg)"/><ellipse cx="300" cy="385" rx="210" ry="150" fill="url(#mcglow)"/><ellipse cx="585" cy="690" rx="230" ry="240" fill="url(#mcdark)"/><circle cx="120" cy="590" r="48" fill="url(#mcbok)"/><circle cx="235" cy="550" r="42" fill="url(#mcbok)"/><circle cx="60" cy="160" r="55" fill="url(#mcbok)"/><circle cx="200" cy="95" r="38" fill="url(#mcbok)"/><circle cx="560" cy="150" r="30" fill="url(#mcbok)"/><circle cx="400" cy="330" r="40" fill="url(#mcbok)"/><circle cx="505" cy="60" r="28" fill="url(#mcbok)"/><circle cx="330" cy="640" r="40" fill="url(#mcbok)"/><g filter="url(#mcblur3)"><path d="M206 -16.5Q224.2 -35.7 227.6 -9.5L230 8.7Q231.9 22.7 244.6 28.7L261.2 36.6Q285 48 261.2 59.4L244.6 67.3Q231.9 73.3 230 87.3L227.6 105.5Q224.2 131.7 206 112.5L193.4 99.2Q183.7 89 169.8 91.6L151.8 94.9Q125.8 99.7 138.4 76.5L147.2 60.4Q153.9 48 147.2 35.6L138.4 19.5Q125.8 -3.7 151.8 1.1L169.8 4.4Q183.7 7 193.4 -3.2Z" fill="url(#mcs1)" stroke="#1f3c88" stroke-width="4.4" stroke-linejoin="round"/><path d="M197.8 3.1Q210.3 -7.4 214.3 8.5L216 15.6Q218.6 26.2 227.9 32L234.1 35.8Q248 44.5 234.1 53.1L227.9 57Q218.6 62.8 216 73.4L214.3 80.5Q210.3 96.4 197.8 85.8L192.2 81.1Q183.9 74.1 173 74.8L165.7 75.4Q149.3 76.5 155.5 61.4L158.3 54.6Q162.4 44.5 158.3 34.4L155.5 27.6Q149.3 12.4 165.7 13.6L173 14.1Q183.9 14.9 192.2 7.9Z" fill="#9cc8ea" opacity=".28"/></g><g filter="url(#mcblur3)"><path d="M413.4 1.9Q418.5 -13.5 427.6 -0.1L433.8 9Q438.7 16.2 447.3 16.2L458.3 16.3Q474.5 16.3 464.6 29.1L457.9 37.9Q452.6 44.7 455.2 52.9L458.6 63.4Q463.5 78.8 448.3 73.4L437.9 69.7Q429.8 66.7 422.7 71.8L413.8 78.2Q400.6 87.7 401.1 71.5L401.5 60.5Q401.7 51.8 394.8 46.7L385.9 40.2Q372.8 30.6 388.4 26.1L399 23Q407.2 20.6 410 12.4Z" fill="url(#mcs2)" stroke="#23448e" stroke-width="2.7" stroke-linejoin="round"/><path d="M415 13.8Q419.2 4.7 425.7 12.3L428.6 15.6Q433 20.7 439.6 21.5L444 22Q453.9 23.2 448.7 31.7L446.4 35.5Q443 41.2 444.3 47.8L445.1 52.1Q447.1 61.9 437.3 59.6L433.1 58.6Q426.5 57.1 420.7 60.3L416.9 62.5Q408.1 67.4 407.3 57.4L406.9 53Q406.4 46.4 401.5 41.8L398.2 38.8Q390.9 32 400.1 28.1L404.2 26.5Q410.4 23.9 413.2 17.8Z" fill="#a0ccec" opacity=".28"/></g><g filter="url(#mcblur3)"><path d="M24.6 110.6Q29.1 90.1 42.6 106.1L51.9 117Q59.1 125.5 70.3 124.4L84.5 123Q105.4 120.9 94.3 138.8L86.8 150.9Q80.9 160.4 85.4 170.7L91.2 183.8Q99.6 203 79.2 198L65.3 194.6Q54.5 192 46.1 199.4L35.4 208.9Q19.8 222.9 18.2 202L17.2 187.7Q16.3 176.5 6.6 170.9L-5.7 163.7Q-23.8 153.1 -4.4 145.2L8.8 139.7Q19.2 135.5 21.6 124.6Z" fill="url(#mcs3)" stroke="#cc3a80" stroke-width="3.5" stroke-linejoin="round"/><path d="M28.5 125.4Q32.7 113.1 42.2 122L46.3 125.9Q52.6 131.9 61.3 132L67 132Q80 132.2 74.4 144L72 149.1Q68.3 157 70.9 165.2L72.6 170.7Q76.4 183.1 63.5 181.4L57.9 180.7Q49.3 179.6 42.2 184.6L37.6 187.9Q26.9 195.4 24.5 182.6L23.5 177.1Q21.9 168.5 14.9 163.4L10.3 160Q-0.1 152.2 11.3 145.9L16.3 143.2Q23.9 139 26.7 130.8Z" fill="#fbd4e2" opacity=".28"/></g><g filter="url(#mcblur3)" opacity="0.92"><path d="M490.4 460.3Q497.7 450.4 502 461.9L504.8 469.2Q507.1 475.4 513.3 477.5L520.7 480Q532.4 483.9 522.8 491.6L516.7 496.4Q511.5 500.5 511.5 507.1L511.4 514.9Q511.2 527.2 501 520.4L494.5 516.1Q489 512.5 482.7 514.5L475.3 516.8Q463.5 520.5 466.8 508.6L468.9 501.1Q470.6 494.8 466.8 489.4L462.3 483.1Q455.1 473 467.4 472.5L475.2 472.1Q481.8 471.8 485.7 466.5Z" fill="url(#mcs4)" stroke="#a83c7c" stroke-width="2.1" stroke-linejoin="round"/><path d="M488.7 469.7Q493.9 464.2 497.4 471L498.8 473.7Q501.1 478.2 505.7 480.4L508.5 481.7Q515.4 484.9 510 490.4L507.9 492.5Q504.3 496.2 503.7 501.2L503.3 504.2Q502.3 511.8 495.5 508.4L492.7 507Q488.2 504.7 483.2 505.7L480.2 506.2Q472.7 507.6 473.9 500.1L474.3 497.1Q475.1 492.1 472.6 487.6L471.2 484.9Q467.5 478.2 475 477L478.1 476.5Q483.1 475.7 486.6 472Z" fill="#f6a8c4" opacity=".28"/></g><g><ellipse cx="105" cy="512" rx="58" ry="60" fill="url(#mcb1)"/><g fill="#f4e8ff" opacity=".9"><polygon points="69.4,520.6 69.2,523.1 71.4,524.5 68.9,525.1 68.3,527.6 66.9,525.4 64.3,525.6 66,523.6 65,521.2 67.4,522.2"/><polygon points="137.2,489.7 138.3,493.3 142,494 138.9,496.1 139.4,499.8 136.4,497.5 133,499.1 134.3,495.6 131.7,492.9 135.4,493"/><polygon points="118.2,543.5 120.3,545.5 123.1,544.6 121.8,547.2 123.6,549.6 120.7,549.2 119,551.6 118.5,548.7 115.6,547.9 118.2,546.4"/><polygon points="74.7,474.1 74.5,476.3 76.3,477.5 74.2,478 73.6,480.1 72.5,478.2 70.3,478.4 71.7,476.7 70.9,474.7 72.9,475.5"/><polygon points="145.3,534.7 145.8,537.1 148.1,537.8 146,539 146,541.5 144.2,539.8 141.9,540.6 142.9,538.4 141.4,536.4 143.9,536.7"/><polygon points="102.9,497.1 103,500.4 106,501.8 103,502.9 102.6,506.2 100.6,503.7 97.4,504.3 99.1,501.6 97.5,498.7 100.7,499.6"/><polygon points="155.1,502 156.7,504.3 159.6,504 157.8,506.3 159.1,508.9 156.4,507.9 154.3,509.9 154.3,507 151.8,505.7 154.5,504.8"/><polygon points="129.4,470.2 129.8,472.6 132.1,473.4 130,474.5 130,477 128.2,475.2 125.9,476 127,473.8 125.5,471.8 128,472.2"/><polygon points="93.9,532 95.6,534.1 98.2,533.6 96.8,535.8 98.1,538.1 95.5,537.4 93.7,539.4 93.6,536.7 91.2,535.6 93.6,534.7"/><polygon points="117.3,514.7 117.4,518.5 120.8,520.1 117.2,521.4 116.7,525.2 114.4,522.2 110.7,522.8 112.8,519.7 111,516.4 114.6,517.4"/><polygon points="71.4,494.1 73.3,496.8 76.6,496.3 74.6,499 76.1,502 73,501 70.6,503.3 70.6,500 67.7,498.4 70.8,497.4"/><polygon points="87.1,555.2 89.3,557.8 92.6,557 90.8,559.9 92.6,562.8 89.3,562 87.1,564.6 86.8,561.2 83.7,559.9 86.8,558.6"/><polygon points="100.9,456.8 102.2,458.5 104.2,458.1 103,459.8 104,461.7 102,461.1 100.5,462.6 100.5,460.5 98.6,459.5 100.6,458.9"/></g></g><g><ellipse cx="366" cy="517" rx="54" ry="60" fill="url(#mcb2)"/><g fill="#f4e8ff" opacity=".9"><polygon points="328.5,520.6 328.5,523.1 330.7,524.2 328.3,525 327.9,527.5 326.5,525.5 324,525.9 325.5,523.8 324.4,521.6 326.7,522.4"/><polygon points="358.7,495.6 358.5,498.5 361,500 358.2,500.7 357.5,503.5 355.9,501.1 353,501.3 354.9,499.1 353.8,496.4 356.5,497.5"/><polygon points="396.6,515 397.1,517.9 400,518.8 397.4,520.2 397.5,523.3 395.3,521.2 392.4,522.2 393.7,519.5 391.9,517.1 394.9,517.5"/><polygon points="358.2,561 360,563.2 362.9,562.6 361.3,565.1 362.8,567.6 360,566.9 358,569.1 357.8,566.2 355.2,565 357.9,563.9"/><polygon points="351.3,474.5 352.9,476.5 355.3,476 353.9,478.1 355.1,480.3 352.7,479.6 350.9,481.4 350.9,478.9 348.6,477.8 351,477"/><polygon points="330,497 330.5,500 333.4,500.8 330.8,502.3 330.9,505.3 328.7,503.2 325.8,504.3 327.1,501.5 325.3,499.1 328.3,499.5"/><polygon points="387.1,542.1 387.1,544.5 389.2,545.7 386.9,546.4 386.5,548.7 385.1,546.8 382.7,547.1 384.1,545.2 383.1,543.1 385.4,543.8"/><polygon points="348.8,542.3 350.6,544.6 353.4,544.1 351.8,546.4 353.2,548.9 350.4,548.1 348.5,550.2 348.4,547.4 345.8,546.2 348.5,545.2"/><polygon points="410.9,533.1 410.6,535.6 412.7,536.9 410.3,537.4 409.6,539.9 408.3,537.7 405.8,537.8 407.5,535.9 406.6,533.6 408.9,534.6"/><polygon points="360.3,518 361.3,521.5 364.8,522.3 361.8,524.3 362.2,527.9 359.3,525.6 356,527.1 357.3,523.7 354.9,521 358.5,521.2"/><polygon points="381,477 380.7,480.5 383.7,482.4 380.3,483.1 379.4,486.5 377.6,483.5 374.1,483.8 376.4,481.1 375.1,477.9 378.3,479.2"/><polygon points="414,507.4 415.3,509.9 418.2,509.9 416.1,511.9 417.1,514.7 414.5,513.4 412.2,515.1 412.6,512.3 410.2,510.6 413.1,510.1"/><polygon points="383.4,499.1 383.3,502.5 386.3,504.1 383.1,505.1 382.4,508.4 380.5,505.6 377.1,506.1 379.2,503.4 377.8,500.3 381,501.4"/></g></g><g><path d="M229.1 397.3Q241.6 364.1 262.7 392.6L276.1 410.6Q287.4 425.8 306.2 426.6L328.7 427.7Q364.1 429.3 343.6 458.1L330.5 476.5Q319.6 491.9 324.6 510.1L330.6 531.8Q340 565.9 306.2 555.3L284.7 548.6Q266.7 542.9 250.9 553.3L232.2 565.7Q202.6 585.2 202.2 549.8L202 527.3Q201.8 508.4 187 496.6L169.5 482.6Q141.8 460.5 175.3 449.2L196.7 442Q214.6 436 221.2 418.3Z" fill="url(#mcs5)" stroke="#5a26c4" stroke-width="5.9" stroke-linejoin="round"/><path d="M233 423.3Q243.1 403.8 258.1 419.8L264.2 426.2Q274.2 436.9 288.7 439.2L297.4 440.7Q319 444.2 308.5 463.5L304.3 471.2Q297.2 484 299.4 498.5L300.8 507.2Q304.1 528.9 282.5 524.8L273.9 523.2Q259.5 520.5 246.4 527L238.5 531Q218.9 540.9 216.1 519.1L215 510.4Q213.2 495.8 202.9 485.4L196.7 479.2Q181.2 463.6 201.1 454.2L209 450.4Q222.3 444.2 229 431.2Z" fill="#c4a4f8" opacity=".28"/></g><g><ellipse cx="171" cy="730" rx="54" ry="58" fill="url(#mcb3)"/><g fill="#fff" opacity=".9"><polygon points="168.6,768.4 169.9,771.4 173.2,771.5 170.8,773.7 171.6,776.9 168.8,775.3 166.1,777.1 166.7,773.9 164.2,771.8 167.4,771.5"/><polygon points="154,683.2 154.1,685.2 155.9,686 154,686.8 153.8,688.8 152.5,687.2 150.5,687.6 151.7,685.9 150.6,684.2 152.6,684.7"/><polygon points="181.1,749.3 181.5,751.9 184.1,752.8 181.7,754 181.6,756.7 179.7,754.8 177.2,755.6 178.4,753.2 176.9,751 179.5,751.4"/><polygon points="171.5,707 171.2,710.3 174,712.1 170.7,712.8 169.9,716 168.2,713.2 164.9,713.4 167.1,710.9 165.9,707.8 168.9,709.1"/><polygon points="150.1,721.7 150.3,724.3 152.8,725.3 150.3,726.3 150.2,728.9 148.4,726.9 145.9,727.5 147.2,725.3 145.9,723.1 148.4,723.7"/><polygon points="188.6,691.3 191.1,693.3 193.9,692 192.8,694.9 194.9,697.2 191.8,697.1 190.3,699.8 189.5,696.8 186.4,696.2 189,694.4"/><polygon points="195.4,727.9 197.3,730.6 200.4,730.1 198.5,732.7 199.9,735.6 196.9,734.5 194.6,736.7 194.6,733.5 191.8,732 194.9,731.1"/><polygon points="200.4,765.1 200.1,768 202.5,769.5 199.7,770.2 199,773 197.5,770.5 194.7,770.7 196.6,768.5 195.5,765.8 198.1,767"/><polygon points="212.1,711.2 213.2,713.9 216.1,714.1 213.9,716 214.6,718.8 212.1,717.3 209.7,718.9 210.3,716 208.1,714.2 211,713.9"/><polygon points="127.8,729.8 129.6,732 132.4,731.5 130.8,733.9 132.1,736.4 129.4,735.6 127.4,737.6 127.4,734.8 124.8,733.6 127.5,732.6"/><polygon points="148.4,751.9 150.5,753.9 153.2,753 151.9,755.6 153.7,758 150.8,757.5 149.1,759.9 148.6,757 145.8,756.2 148.4,754.8"/><polygon points="136.2,699.2 138.5,701.2 141.3,700.1 140.1,702.9 142,705.2 139,704.9 137.4,707.5 136.7,704.5 133.8,703.7 136.4,702.2"/><polygon points="166.4,725.9 168.9,728.7 172.5,727.7 170.6,730.9 172.6,734 169,733.3 166.6,736.1 166.3,732.4 162.8,731.1 166.2,729.6"/><polygon points="128.1,750.8 130.1,752.6 132.6,751.6 131.5,754 133.2,756.1 130.6,755.9 129.2,758.1 128.6,755.5 126,754.9 128.3,753.5"/></g></g><g><path d="M127.6 536.9Q129.1 504.8 155.3 523.4L171.9 535.2Q185.8 545.2 202.4 540.6L222 535.2Q253 526.7 243.4 557.3L237.3 576.8Q232.2 593.1 241.6 607.4L252.8 624.4Q270.5 651.2 238.4 651.6L218 651.8Q200.9 652 190.2 665.3L177.4 681.3Q157.4 706.4 147.2 676L140.7 656.6Q135.2 640.4 119.2 634.4L100.1 627.2Q70 615.9 95.8 596.7L112.2 584.6Q125.9 574.4 126.7 557.3Z" fill="url(#mcs6)" stroke="#3454c0" stroke-width="5.4" stroke-linejoin="round"/><path d="M139.4 556.7Q142.6 537.1 160.1 546.7L167.1 550.5Q178.7 556.9 191.9 554.9L199.8 553.6Q219.4 550.6 215.7 570.2L214.3 578.1Q211.8 591.1 217.8 602.9L221.4 610.1Q230.3 627.9 210.6 630.4L202.6 631.4Q189.5 633.1 180 642.4L174.3 648.1Q160.2 662.1 151.7 644.1L148.3 636.8Q142.6 624.8 130.8 618.7L123.7 615.1Q106 606 120.5 592.3L126.3 586.8Q136 577.7 138.1 564.6Z" fill="#a8d0fa" opacity=".28"/></g><g transform="rotate(-12 259 756)"><ellipse cx="259" cy="756" rx="55" ry="66" fill="url(#mcb4)"/><g fill="#fff" opacity=".9"><polygon points="291.5,783.9 292.3,785.8 294.4,786 292.8,787.4 293.3,789.5 291.5,788.4 289.7,789.4 290.2,787.4 288.6,786 290.7,785.8"/><polygon points="230.2,706.2 231.6,707.7 233.6,707 232.6,708.9 233.8,710.6 231.8,710.2 230.6,711.9 230.3,709.8 228.3,709.2 230.1,708.3"/><polygon points="257.7,781.4 257.6,784.7 260.5,786.3 257.3,787.2 256.7,790.5 254.8,787.8 251.5,788.2 253.5,785.5 252.1,782.5 255.2,783.6"/><polygon points="254.6,704.4 255.8,706.6 258.4,706.5 256.6,708.4 257.5,710.8 255.2,709.7 253.1,711.2 253.5,708.7 251.4,707.3 253.9,706.8"/><polygon points="224.7,783.8 225.4,786.4 228.1,786.9 225.8,788.4 226.2,791.1 224,789.4 221.6,790.6 222.5,788 220.7,786.1 223.4,786.1"/><polygon points="282.5,731.3 284,733.7 286.8,733.5 285,735.7 286,738.3 283.4,737.2 281.2,739.1 281.5,736.2 279,734.7 281.8,734.1"/><polygon points="256.4,804.5 257.4,807.5 260.6,808 258,809.9 258.6,813.1 256,811.2 253.2,812.7 254.1,809.7 251.8,807.5 255,807.4"/><polygon points="247.5,734.9 247.7,737.9 250.5,739.2 247.6,740.3 247.3,743.4 245.4,741 242.4,741.6 244,739 242.5,736.4 245.5,737.2"/><polygon points="220.4,735.6 222,738.7 225.5,738.7 223,741.2 224,744.6 220.9,743 218,745 218.6,741.5 215.8,739.4 219.3,738.9"/><polygon points="277.7,765.9 279.1,767.9 281.5,767.6 280,769.6 281,771.8 278.7,771 276.9,772.7 277,770.2 274.8,769 277.2,768.3"/><polygon points="290,748.7 292.4,751.4 295.9,750.4 294.1,753.6 296,756.6 292.5,755.8 290.3,758.6 289.9,755.1 286.5,753.8 289.8,752.3"/><polygon points="258.7,761.5 259,764.6 261.8,765.7 259,766.9 258.8,770 256.8,767.7 253.9,768.4 255.4,765.8 253.8,763.2 256.8,763.9"/><polygon points="219.5,759 219.6,761.2 221.6,762.2 219.5,763 219.2,765.2 217.8,763.4 215.6,763.8 216.9,762 215.8,760 217.9,760.6"/><polygon points="290.4,709.7 291.5,711.6 293.8,711.6 292.3,713.2 293.1,715.4 291,714.4 289.2,715.8 289.5,713.6 287.6,712.3 289.8,711.8"/><polygon points="264.5,720 266.9,722.3 270,721.3 268.6,724.2 270.5,726.8 267.3,726.4 265.4,729.1 264.8,725.8 261.7,724.9 264.6,723.3"/><polygon points="278.9,798.7 280.3,801.5 283.4,801.5 281.2,803.7 282.1,806.6 279.3,805.2 276.8,807 277.3,803.9 274.9,802.1 277.9,801.6"/></g></g><g><ellipse cx="507" cy="828" rx="37" ry="43" fill="url(#mcb5)"/><g fill="#f0c8f4" opacity=".9"><polygon points="511.9,824.1 511.8,826.4 513.8,827.5 511.6,828.1 511.1,830.3 509.9,828.4 507.7,828.7 509,826.9 508.1,824.9 510.2,825.7"/><polygon points="505.2,809.2 506.5,811.2 508.9,811 507.4,812.9 508.4,815.1 506.1,814.2 504.3,815.9 504.4,813.4 502.3,812.3 504.7,811.6"/><polygon points="527.2,803.6 527.7,805.2 529.4,805.6 528,806.5 528.2,808.2 526.9,807.2 525.3,807.9 525.9,806.3 524.7,805 526.4,805.1"/><polygon points="507.7,847.2 508.9,849.1 511.2,848.9 509.7,850.7 510.6,852.8 508.5,851.9 506.8,853.4 506.9,851.1 505,850 507.2,849.4"/><polygon points="487.9,816.6 488.9,817.8 490.5,817.4 489.7,818.8 490.6,820.1 489,819.8 488,821.1 487.8,819.5 486.3,818.9 487.8,818.2"/><polygon points="475.4,827.4 475.7,829.4 477.7,830.1 475.8,831 475.8,833.1 474.4,831.6 472.4,832.3 473.3,830.4 472.1,828.7 474.2,829"/><polygon points="522.9,859.2 522.9,860.6 524.2,861.2 522.9,861.7 522.7,863.1 521.8,862 520.4,862.2 521.2,861.1 520.5,859.8 521.9,860.2"/><polygon points="496.2,794.7 497.2,796.3 499.2,796.1 497.9,797.6 498.7,799.4 496.9,798.7 495.4,800 495.6,798 493.9,797.1 495.8,796.6"/><polygon points="524.4,817.3 526.1,819.1 528.5,818.3 527.4,820.5 528.8,822.5 526.4,822.1 524.9,824.1 524.5,821.7 522.2,820.9 524.4,819.8"/><polygon points="495.4,827.5 496.4,829 498.2,828.9 497,830.3 497.7,832 496,831.3 494.7,832.5 494.8,830.6 493.2,829.7 495,829.3"/><polygon points="537.6,834.5 538.2,836.4 540.2,836.6 538.6,837.9 539,839.8 537.4,838.7 535.6,839.7 536.2,837.7 534.7,836.4 536.7,836.3"/><polygon points="512.6,796.1 512.5,798 514.2,799 512.4,799.5 512,801.4 510.9,799.8 509,800 510.2,798.5 509.4,796.8 511.2,797.4"/><polygon points="494.4,852.5 494.6,854.3 496.2,855 494.6,855.7 494.5,857.5 493.3,856.1 491.5,856.6 492.4,855 491.5,853.5 493.2,853.9"/><polygon points="507.7,864.6 507.8,865.9 509,866.4 507.8,866.9 507.7,868.2 506.9,867.3 505.6,867.6 506.3,866.4 505.6,865.3 506.8,865.6"/></g></g><g><ellipse cx="291" cy="874" rx="37" ry="40" fill="url(#mcb6)"/><g fill="#fff" opacity=".9"><polygon points="277.3,889.7 277.5,892.2 279.7,893.2 277.4,894.1 277.1,896.5 275.6,894.6 273.2,895.1 274.5,893 273.3,890.9 275.7,891.5"/><polygon points="289.6,899.5 290.4,901.5 292.6,901.7 290.9,903.1 291.3,905.3 289.5,904.1 287.6,905.2 288.2,903.1 286.5,901.6 288.7,901.5"/><polygon points="308.3,872.8 309.6,874.1 311.3,873.6 310.5,875.2 311.5,876.7 309.7,876.4 308.6,877.8 308.3,876 306.6,875.4 308.3,874.6"/><polygon points="290.1,851.2 290.9,852.9 292.8,853 291.4,854.3 291.9,856.1 290.3,855.2 288.7,856.3 289.1,854.4 287.6,853.2 289.5,853"/><polygon points="299.4,837.9 299.6,839.3 300.9,839.7 299.7,840.3 299.8,841.7 298.8,840.7 297.5,841.2 298.1,840 297.2,838.9 298.6,839"/><polygon points="276.7,857 278.5,858.5 280.6,857.5 279.8,859.7 281.4,861.4 279.1,861.3 277.9,863.4 277.3,861.1 275,860.7 276.9,859.3"/><polygon points="270.8,843.6 271.6,845.5 273.7,845.6 272.1,847 272.6,849 270.8,847.9 269.1,849 269.5,847 267.9,845.7 270,845.5"/><polygon points="289,877.1 290.2,879.7 293.1,879.9 290.9,881.8 291.7,884.6 289.2,883.2 286.8,884.7 287.4,881.9 285.1,880.1 288,879.8"/></g></g><g><path d="M350.5 820.4Q353.3 796 372.3 811.6L384.4 821.5Q394.5 829.8 407.4 827.2L422.7 824.2Q446.8 819.3 437.8 842.2L432.1 856.8Q427.4 869 433.8 880.4L441.5 894Q453.5 915.5 429 914L413.4 913.1Q400.3 912.3 391.4 922L380.8 933.5Q364.2 951.6 358 927.8L354 912.6Q350.7 899.9 338.8 894.5L324.6 888Q302.2 877.7 322.9 864.5L336.1 856Q347.1 849 348.7 835.9Z" fill="url(#mcs7)" stroke="#e02c80" stroke-width="4.1" stroke-linejoin="round"/><path d="M358.2 836.4Q361.7 821.6 374.5 829.8L379.7 833.1Q388.2 838.6 398.4 837.8L404.5 837.3Q419.7 836 415.8 850.8L414.2 856.7Q411.7 866.6 415.6 875.9L417.9 881.6Q423.8 895.7 408.6 896.5L402.5 896.9Q392.3 897.5 384.6 904.1L380 908.1Q368.4 918 362.9 903.8L360.7 898.1Q357 888.7 348.3 883.4L343 880.2Q330 872.3 341.8 862.6L346.6 858.7Q354.4 852.3 356.8 842.4Z" fill="#ffb0cc" opacity=".28"/></g><g><path d="M301.2 546.6Q311.1 513.5 333.5 539.7L347.8 556.4Q359.8 570.3 378.2 569.9L400.1 569.3Q434.6 568.5 416.6 597.9L405.2 616.7Q395.6 632.4 401.7 649.7L409 670.4Q420.5 703 386.9 695L365.6 689.9Q347.7 685.6 333.1 696.8L315.6 710.1Q288.2 731.1 285.5 696.7L283.7 674.8Q282.2 656.5 267.1 646L249 633.6Q220.6 614 252.5 600.7L272.7 592.3Q289.7 585.2 295 567.6Z" fill="url(#mcs8)" stroke="#e83498" stroke-width="5.8" stroke-linejoin="round"/><path d="M307.1 571.3Q315.6 551.7 331.3 566.2L337.6 572Q348.1 581.7 362.3 583L370.8 583.8Q392.1 585.8 383.2 605.2L379.6 613Q373.7 625.9 376.8 639.9L378.7 648.2Q383.4 669.1 362.1 666.6L353.6 665.6Q339.4 663.9 327.2 671.2L319.8 675.6Q301.4 686.5 297.2 665.6L295.5 657.1Q292.7 643.1 282 633.7L275.6 628.1Q259.5 613.9 278.1 603.5L285.6 599.3Q298.1 592.3 303.7 579.2Z" fill="#ffc0dc" opacity=".28"/></g><g><path d="M411 718.9Q421 698.1 433.1 717.8L440.8 730.3Q447.2 740.8 459.4 742.4L474 744.3Q496.9 747.4 481.9 765L472.4 776.2Q464.4 785.6 466.6 797.7L469.3 812.1Q473.5 834.8 452.1 826L438.5 820.4Q427.1 815.8 416.3 821.6L403.4 828.6Q383.1 839.6 384.8 816.5L386 801.9Q386.9 789.6 378 781.1L367.4 771Q350.6 755.1 373.1 749.6L387.3 746.2Q399.3 743.3 404.6 732.2Z" fill="url(#mcs9)" stroke="#1c5494" stroke-width="3.9" stroke-linejoin="round"/><path d="M411.8 736.4Q419.4 724.2 428.3 735.5L431.9 740Q437.8 747.5 447 749.9L452.6 751.3Q466.5 754.8 458.5 766.7L455.3 771.5Q450 779.5 450.7 789L451 794.7Q452 809 438.2 805.1L432.6 803.6Q423.4 801 414.6 804.5L409.2 806.7Q395.9 812 395.3 797.6L395.1 791.9Q394.7 782.4 388.6 775L385 770.6Q375.8 759.6 389.2 754.6L394.6 752.6Q403.6 749.3 408.7 741.2Z" fill="#8cd0f0" opacity=".28"/></g><g fill="none" stroke="#fff" stroke-opacity=".75" stroke-width="1"><path d="M262 590 C300 640 310 720 290 800"/><path d="M330 730 C350 780 340 830 360 861"/><path d="M352 640 C360 720 380 760 425 780"/><path d="M190 705 C230 760 270 820 330 861"/><path d="M250 825 C270 840 290 855 300 861"/></g><text x="206" y="157" font-family="Liberation Sans, sans-serif" font-size="110" font-weight="bold" font-style="italic" fill="#e8b4f2" textLength="196" lengthAdjust="spacingAndGlyphs" transform="rotate(-5 206 157) translate(206 157) skewX(-8) translate(-206 -157)">Happy</text><text x="151.500" y="250.500" font-family="Liberation Sans, sans-serif" font-size="111" font-weight="bold" fill="#fff" letter-spacing="20" textLength="307" lengthAdjust="spacingAndGlyphs" filter="url(#mcfat)">BIRTHDAY</text><text x="238.600 270 294.900 326.800 363.400" y="287.800" font-family="Liberation Sans, sans-serif" font-size="29" font-weight="bold" fill="#deb0f4">O YOU</text><text x="141" y="326.400" font-family="Liberation Sans, sans-serif" font-size="28" font-weight="bold" fill="#e2b4f2">T</text><text x="163.500" y="341.500" font-family="Liberation Sans, sans-serif" font-size="15.500" fill="#fff" textLength="279">Lorem ipsum dolor sit amet, consecte-</text><text x="197" y="358.500" font-family="Liberation Sans, sans-serif" font-size="15.500" fill="#fff" textLength="213">tuer adipiscing elit, sed diam.</text></svg>
<!-- toolbar -->
<div class="grp" style="left:412px;top:64px;width:112px;height:59px"></div>
<svg class="ic" style="left:428px;top:76px;stroke-width:1.900" width="32" height="34" viewBox="0 0 32 34"><defs><clipPath id="tclip"><rect x="0" y="0" width="32" height="14.400"/></clipPath></defs><path d="M3.400 14.400 H28.600 V25.800 a4.500 4.500 0 0 1 -4.500 4.500 H7.900 a4.500 4.500 0 0 1 -4.500 -4.500 Z"/><rect x="11" y="18.800" width="10.600" height="2.600" rx="1.300"/><circle cx="18.100" cy="5.100" r="2"/><g clip-path="url(#tclip)"><path d="M8.900 5.700 L10.800 9.300 L14.900 9.900 L12 12.800 L12.600 17 L8.900 15.200 L5.200 17 L5.800 12.800 L2.900 9.900 L7 9.300 Z"/><path d="M19.800 15 L23.600 9.400 L27.600 15 Z"/></g></svg>
<div class="t" id="tools" style="left:468.2px;top:89px;font-size:16.8px;color:#141c18;letter-spacing:-0.6px;font-weight:bold">Tools</div>
<div class="grp" style="left:551px;top:64px;width:308px;height:59px"></div>
<div class="gbtn" style="left:555px;top:70px"></div>
<svg class="ic" style="left:567px;top:80px;stroke:#fff;stroke-width:1.800" width="26" height="28" viewBox="0 0 26 28"><path d="M3.200 3.500 C3 2.500 3.800 1.800 4.800 2.200 L22.800 11.500 C23.800 12 23.600 13.400 22.500 13.600 L14 15.200 L9.800 23.800 C9.300 24.800 7.900 24.600 7.700 23.500 Z"/></svg>
<svg class="ic" style="left:609px;top:91px;stroke:#1f2622;stroke-width:1.8" width="10" height="6" viewBox="0 0 10 6"><path d="M1 1 L5.0 5 L9 1"/></svg>
<div class="abs" style="left:637px;top:86px;width:1px;height:17px;background:#cfd5d2"></div>
<svg class="ic" style="left:659px;top:79px;stroke-width:1.800" width="30" height="30" viewBox="0 0 30 30"><rect x="2" y="2" width="26" height="26" rx="5"/><path d="M7.500 7.500 H12 M9.800 7.500 V22.500 M7.500 22.500 H12 M18 7.500 H22.500 M20.200 7.500 V22.500 M18 22.500 H22.500 M9.800 15 H20.200"/></svg>
<svg class="ic" style="left:703px;top:91px;stroke:#1f2622;stroke-width:1.8" width="10" height="6" viewBox="0 0 10 6"><path d="M1 1 L5.0 5 L9 1"/></svg>
<svg class="ic" style="left:738px;top:80px;stroke-width:1.600" width="34" height="28" viewBox="0 0 34 28"><path d="M2.800 6.500 V2.800 H30.200 V6.500 M16.500 2.800 V25.500 M11 25.500 H22"/></svg>
<svg class="ic" style="left:785px;top:91px;stroke:#1f2622;stroke-width:1.8" width="10" height="6" viewBox="0 0 10 6"><path d="M1 1 L5.0 5 L9 1"/></svg>
<svg class="ic" style="left:819px;top:78px;stroke-width:1.800" width="34" height="32" viewBox="0 0 34 32"><path d="M16.500 2.800 C8.500 2.800 2.800 8.300 2.800 15.300 C2.800 22.300 8.500 27.800 16.500 27.800 H30 L27.300 23 C29.200 20.800 30.200 18.200 30.200 15.300 C30.200 8.300 24.500 2.800 16.500 2.800 Z"/><path d="M10.800 12.300 H21.500 M10.800 18 H17.500"/></svg>
<div class="grp" style="left:887px;top:64px;width:138px;height:59px"></div>
<svg class="ic" style="left:906px;top:79px;stroke-width:1.800" width="28" height="30" viewBox="0 0 28 30"><rect x="2" y="2.200" width="24" height="26" rx="5.500"/><path d="M8.500 2.500 V6 a2.200 2.200 0 0 0 2.200 2.200 H17.300 a2.200 2.200 0 0 0 2.200 -2.200 V2.500"/><circle cx="14" cy="18.300" r="3.600"/></svg>
<svg class="ic" style="left:950px;top:91px;stroke:#1f2622;stroke-width:1.8" width="10" height="6" viewBox="0 0 10 6"><path d="M1 1 L5.0 5 L9 1"/></svg>
<div class="abs" style="left:971px;top:70px;width:48px;height:48px;border-radius:9px;background:linear-gradient(150deg,#c4cdf3 0%,#b4d4f2 50%,#a6e2ee 100%)"></div>
<div class="abs" style="left:977px;top:78px;width:32px;height:32px;border-radius:50%;background:linear-gradient(140deg,#6a60ea 0%,#3d8cf2 55%,#4cc6f4 100%)"></div>
<svg class="ic" style="left:977px;top:78px;stroke:#fff;stroke-width:1.700" width="32" height="32" viewBox="0 0 32 32"><ellipse cx="16" cy="16" rx="10.300" ry="7" transform="rotate(-52 16 16)"/><ellipse cx="16" cy="16" rx="10.300" ry="7" transform="rotate(38 16 16)"/><path d="M16 12.600 L17 15 L19.400 16 L17 17 L16 19.400 L15 17 L12.600 16 L15 15 Z" fill="#fff" stroke="none"/></svg>
<!-- bottom bar -->
<div class="grp" style="left:611.500px;top:1239.500px;width:414px;height:58.500px;border-radius:13px;background:#e6eae8"></div>
<div class="abs" style="left:621px;top:1257px;width:23px;height:23px;border-radius:50%;background:#d1d8d4"></div>
<svg class="ic" style="left:629px;top:1263px;stroke-width:1.500" width="8" height="12" viewBox="0 0 8 12"><path d="M1.500 1.500 L6 6 L1.500 10.500"/></svg>
<svg class="ic" style="left:664px;top:1255px;stroke-width:1.700" width="32" height="28" viewBox="0 0 32 28"><path d="M6.500 2.200 H25.500 a4.200 4.200 0 0 1 4.200 4.200 V21.600 a4.200 4.200 0 0 1 -4.200 4.200 H6.500 a4.200 4.200 0 0 1 -4.200 -4.200 V6.400 a4.200 4.200 0 0 1 4.200 -4.200 Z M16 2.500 V25.500"/><path d="M6.800 8.800 H11.800 M6.800 13.800 H11.800 M6.800 18.800 H9.500 M20.200 8.800 H25.200 M20.200 13.800 H25.200 M20.200 18.800 H22.900"/></svg>
<svg class="ic" style="left:725px;top:1255px;stroke-width:1.700" width="32" height="30" viewBox="0 0 32 30"><path d="M9 21.800 H7 a5 5 0 0 1 -5 -5 V7 a5 5 0 0 1 5 -5 H25 a5 5 0 0 1 5 5 V16.800 a5 5 0 0 1 -5 5 H23"/><path d="M16 20.500 L20.500 27.500 H11.500 Z"/></svg>
<div class="abs" style="left:778px;top:1259px;width:1px;height:18px;background:#cfd5d2"></div>
<svg style="left:790px;top:1244px" width="50" height="50" viewBox="0 0 50 50"><rect x="1.750" y="1.500" width="46" height="46" rx="10.500" fill="#f1f4f1" stroke="#49a771" stroke-width="1.500"/></svg>
<div class="t" id="pg1" style="left:807px;top:1258px;font-size:24.5px;color:#1a211d">1</div>
<svg class="ic" style="left:867px;top:1263px;stroke:#8d9490;stroke-width:1.6" width="17" height="9" viewBox="0 0 17 9"><path d="M1 8 L8.500 1 L16 8"/></svg><svg class="ic" style="left:927px;top:1265px;stroke:#8d9490;stroke-width:1.6" width="17" height="9" viewBox="0 0 17 9"><path d="M1 1 L8.5 8 L16 1"/></svg>
<div class="abs" style="left:971px;top:1259px;width:1px;height:18px;background:#cfd5d2"></div>
<div class="abs" style="left:985px;top:1248px;width:37px;height:40px;border-radius:11px 0 0 11px;background:#f0f3f0"></div>
<div class="abs" style="left:1003px;top:1255px;width:19.500px;height:28px;overflow:hidden"><div class="t" id="zm" style="left:0.4px;top:7px;font-size:18.3px;color:#252c28">51%</div></div>

<style>.cl{font-size:21.7px;color:#2d3b35}</style>
<!-- chat panel -->
<div class="panel" style="left:1037.500px;top:58px;width:604.500px;height:1247px;border-radius:12px 0 0 0;background:#e4e7e6"></div>
<div class="abs" style="left:1577px;top:58px;width:65px;height:1247px;background:#e6e9e7;border-left:1px solid #eaedeb"></div>
<div class="t" id="chath" style="left:1048.8px;top:89px;font-size:16.8px;color:#141c18;letter-spacing:-0.3px;font-weight:bold">Chat</div>
<svg class="ic" style="left:1523px;top:78px;stroke-width:1.700" width="32" height="32" viewBox="0 0 32 32"><circle cx="16" cy="16" r="14.300"/><path d="M11 10.500 L16.300 16 L23 13.800"/></svg>
<svg class="ic" style="left:1596px;top:76px;stroke-width:1.800" width="36" height="32" viewBox="0 0 36 32"><path d="M17 10 V27.500 M17 10 C14 7 9 6.500 3 7.500 V25 C9 24 14 24.500 17 27.500 C20 24.500 25 24 31.500 25 V20"/><path d="M17 10 C19 8 21.500 7 24 6.800"/><path d="M29.500 .500 L31 4.500 L35 6 L31 7.500 L29.500 11.500 L28 7.500 L24 6 L28 4.500 Z" fill="#1f2622" stroke="none"/></svg>
<div class="abs" style="left:1061px;top:154px;width:489px;height:860px;border-radius:0 0 18px 18px;background:#f1f4f1"></div>
<div class="t cl" style="left:1084.0px;top:151px;letter-spacing:0.892px">languages, including but not limited to</div><div class="t cl" style="left:1084.0px;top:192px;letter-spacing:-0.048px">English, Chinese, French, German, Spanish,</div><div class="t cl" style="left:1084.0px;top:232px;letter-spacing:-0.084px">Japanese, Korean, etc.</div><div class="t cl" style="left:1084.0px;top:273px;letter-spacing:0.473px">Summarize: I can extract key information</div><div class="t cl" style="left:1084.0px;top:313px;letter-spacing:0.588px">from the text and form a concise summary</div><div class="t cl" style="left:1084.0px;top:354px;letter-spacing:0.814px">to help you quickly understand the content</div><div class="t cl" style="left:1084.0px;top:394px;letter-spacing:0.711px">of the text.</div><div class="t cl" style="left:1084.0px;top:435px;letter-spacing:0.484px">Explain: I can explain a topic in depth,</div><div class="t cl" style="left:1084.0px;top:475px;letter-spacing:0.767px">providing related knowledge, background,</div><div class="t cl" style="left:1084.0px;top:516px;letter-spacing:0.332px">explanations, examples, etc., to help you</div><div class="t cl" style="left:1084.0px;top:556px;letter-spacing:0.601px">better understand and master the topic.</div><div class="t cl" style="left:1084.0px;top:597px;letter-spacing:0.469px">Write: I can generate articles that meet the</div><div class="t cl" style="left:1084.0px;top:637px;letter-spacing:0.547px">specifications and are coherent and</div><div class="t cl" style="left:1084.0px;top:678px;letter-spacing:0.671px">coherent according to your requirements</div><div class="t cl" style="left:1084.0px;top:718px;letter-spacing:0.344px">and materials. They can be used in various</div><div class="t cl" style="left:1084.0px;top:759px;letter-spacing:-0.030px">occasions, such as papers, reports, press</div><div class="t cl" style="left:1084.0px;top:799px;letter-spacing:0.176px">releases, advertising copy, etc.</div><div class="t cl" style="left:1084.0px;top:840px;letter-spacing:0.599px">Please note that in [chat] mode, I can't</div><div class="t cl" style="left:1084.0px;top:880px;letter-spacing:0.228px">directly access PDF files. If you need to chat</div><div class="t cl" style="left:1084.0px;top:921px;letter-spacing:0.580px">with the document, please switch to [Ask</div><div class="t cl" style="left:1084.0px;top:961px;letter-spacing:0.277px">PDF] mode.</div>
<!-- input box -->
<div class="abs" style="left:1049.500px;top:1113px;width:512px;height:178px;border-radius:15px;background:#f0f4f1;border:1px solid #e4e9e6"></div>
<div class="t" id="ask" style="left:1062.6px;top:1133px;font-size:16.7px;color:#5c645f;letter-spacing:0.46px">Ask something</div>
<div class="abs" style="left:1061px;top:1232.800px;width:112px;height:47px;border-radius:10px;background:#edf1ee;border:1px solid #c8cecb"></div>
<svg class="ic" style="left:1075px;top:1244px;stroke-width:1.700" width="26" height="26" viewBox="0 0 26 26"><ellipse cx="13" cy="13" rx="13.300" ry="5.700" transform="rotate(45 13 13)"/><ellipse cx="13" cy="13" rx="13.300" ry="5.700" transform="rotate(-45 13 13)"/><circle cx="13" cy="13" r=".900" fill="#1f2622"/></svg>
<div class="t" id="think" style="left:1114.5px;top:1250px;font-size:17.4px;color:#1d2521;letter-spacing:0.1px">Think</div>
<svg class="ic" style="left:1337px;top:1240px;stroke-width:1.600" width="34" height="34" viewBox="0 0 34 34"><path d="M20 3.800 H8 a5 5 0 0 0 -5 5 V25 a5 5 0 0 0 5 5 H24 a5 5 0 0 0 5 -5 V14.500"/><path d="M5.500 29 C6.500 22 10.500 18.500 17 18.500 M14 29.500 C15 23 19.500 17 29 16.500"/><circle cx="9.800" cy="10.200" r="1.100" fill="#1f2622"/><path d="M26.200 1.800 L27.500 5.500 L31.200 6.800 L27.500 8.100 L26.200 11.800 L24.900 8.100 L21.200 6.800 L24.900 5.500 Z" fill="#1f2622" stroke="none"/></svg>
<svg class="ic" style="left:1396px;top:1241px;stroke-width:1.600" width="34" height="32" viewBox="0 0 34 32"><path d="M2 9.500 V7 a5 5 0 0 1 5 -5 H10 M24 2 H27 a5 5 0 0 1 5 5 V9.500 M32 22 V25 a5 5 0 0 1 -5 5 H24 M10 30 H7 a5 5 0 0 1 -5 -5 V22"/><path d="M12.500 9 L13.800 7 H20.200 L21.500 9 H24 a2.500 2.500 0 0 1 2.500 2.500 V21.500 a2.500 2.500 0 0 1 -2.500 2.500 H10 a2.500 2.500 0 0 1 -2.500 -2.500 V11.500 a2.500 2.500 0 0 1 2.500 -2.500 Z"/><circle cx="17" cy="16.500" r="3.800"/></svg>
<div class="abs" style="left:1449px;top:1233px;width:102px;height:47px;border-radius:9px;background:#cfe3d8"></div>
<svg style="left:1488px;top:1245px" width="24" height="22" viewBox="0 0 24 22"><path d="M1.500 1.200 L22.500 10.800 L1.500 20.500 L5 10.800 Z" fill="#f3f8f5"/><path d="M5 10.800 H13" stroke="#cfe3d8" stroke-width="1.600"/></svg>
<!-- right sidebar icons -->
<div class="gbtn" style="left:1589px;top:136px"></div>
<svg class="ic" style="left:1597px;top:144px;stroke:#f2fff6;stroke-width:1.700" width="36" height="34" viewBox="0 0 36 34"><path d="M18.800 3.300 A13.300 12.600 0 1 0 15.500 28.400 L29.100 28.400 L24.800 24.200 A13.300 12.600 0 0 0 29.100 13.100"/><ellipse cx="11.700" cy="13.600" rx="1.400" ry="2.100" fill="#f2fff6" stroke="none"/><ellipse cx="19.300" cy="13.600" rx="1.400" ry="2.100" fill="#f2fff6" stroke="none"/><path d="M11.400 20.400 Q15.400 23.200 19.300 20.300"/><path d="M25.900 1.200 Q26.700 5.400 30.900 6.200 Q26.700 7 25.900 11.200 Q25.100 7 20.900 6.200 Q25.100 5.400 25.900 1.200 Z" fill="#f2fff6" stroke="none"/></svg>
<svg class="ic" style="left:1598px;top:209px;stroke-width:1.700" width="32" height="34" viewBox="0 0 32 34"><path d="M3.800 17 L9.300 3.400 L14.800 17 M5.600 12.600 H13"/><path d="M20.800 4.800 H23.200 a4.500 4.500 0 0 1 4.500 4.500 V12"/><path d="M2.900 22.300 V25.100 a4.500 4.500 0 0 0 4.500 4.500 H9.900"/></svg>
<div class="t" id="wen1" style="left:1614px;top:228px;font-size:12.500px;font-weight:bold;color:#1f2622;font-family:'Noto Sans CJK SC','Liberation Sans',sans-serif">文</div>
<svg class="ic" style="left:1598px;top:273px;stroke-width:1.700" width="32" height="34" viewBox="0 0 32 34"><path d="M14 30.400 H8.100 a5 5 0 0 1 -5 -5 V8.700 a5 5 0 0 1 5 -5 H22.100 a5 5 0 0 1 5 5 V16"/><path d="M7.400 19.800 L12.300 8.400 L17.200 19.800 M9.200 15.900 H15.400"/></svg>
<div class="t" id="wen2" style="left:1616.500px;top:294px;font-size:12.500px;font-weight:bold;color:#1f2622;font-family:'Noto Sans CJK SC','Liberation Sans',sans-serif">文</div>
<svg class="ic" style="left:1598px;top:341px;stroke-width:1.700" width="34" height="34" viewBox="0 0 34 34"><path d="M10 30.500 H7 a5 5 0 0 1 -5 -5 V7.500 a5 5 0 0 1 5 -5 H21.500 a5 5 0 0 1 5 5 V12"/><path d="M8.500 9.800 H19.500 M8.500 15.500 H16"/><path d="M19.800 19.500 L21.700 24.600 L26.800 26.500 L21.700 28.400 L19.800 33.500 L17.900 28.400 L12.800 26.500 L17.900 24.600 Z M28.800 17 L29.800 19.800 L32.600 20.800 L29.800 21.800 L28.800 24.600 L27.800 21.800 L25 20.800 L27.800 19.800 Z" fill="#1f2622" stroke="none"/></svg>
<svg class="ic" style="left:1598px;top:407px;stroke-width:1.700" width="32" height="34" viewBox="0 0 32 34"><path d="M28 2.500 H7 a5 5 0 0 0 -5 5 V27 M28 2.500 V25 M9.500 2.500 V25 M28 25 H6 a3.600 3.600 0 0 0 0 7.200 H28 M28 32.200 C26.500 30 26.500 27.200 28 25"/></svg>


<!-- annotations -->
<svg style="left:0;top:0" width="1642" height="200" viewBox="0 0 1642 200"><rect x="964.750" y="35.750" width="71" height="98" rx="1.200" fill="none" stroke="#403fc9" stroke-width="7.500" stroke-linejoin="round"/><rect x="1506.150" y="111.750" width="131" height="81.200" rx="1.200" fill="none" stroke="#403fc9" stroke-width="7.700" stroke-linejoin="round"/><path d="M1061.800 60.100 L1200 76.800 L1380 103.750 L1450.900 114 L1449.800 105.700 L1476.700 123.700 L1445.300 133.500 L1449.100 126.400 L1380 114.350 L1200 84.800 L1061.800 61.300 Z" fill="#403fc9"/></svg>
<!-- tooltip -->
<div class="abs" style="left:1515px;top:136.500px;width:60px;height:48px;border-radius:13px;background:#0f0f0f;box-shadow:0 1px 4px rgba(0,0,0,.16)"></div>
<svg style="left:1573px;top:148px" width="14" height="24" viewBox="0 0 14 24"><path d="M0 0 L2 2 L10.500 10.300 Q12 12 10.500 13.700 L2 22 L0 24 Z" fill="#0f0f0f"/></svg>
<div class="t" id="tip" style="left:1527.3px;top:153px;font-size:17.6px;color:#fff;letter-spacing:-0.45px">Chat</div>

</div>
</body></html>
